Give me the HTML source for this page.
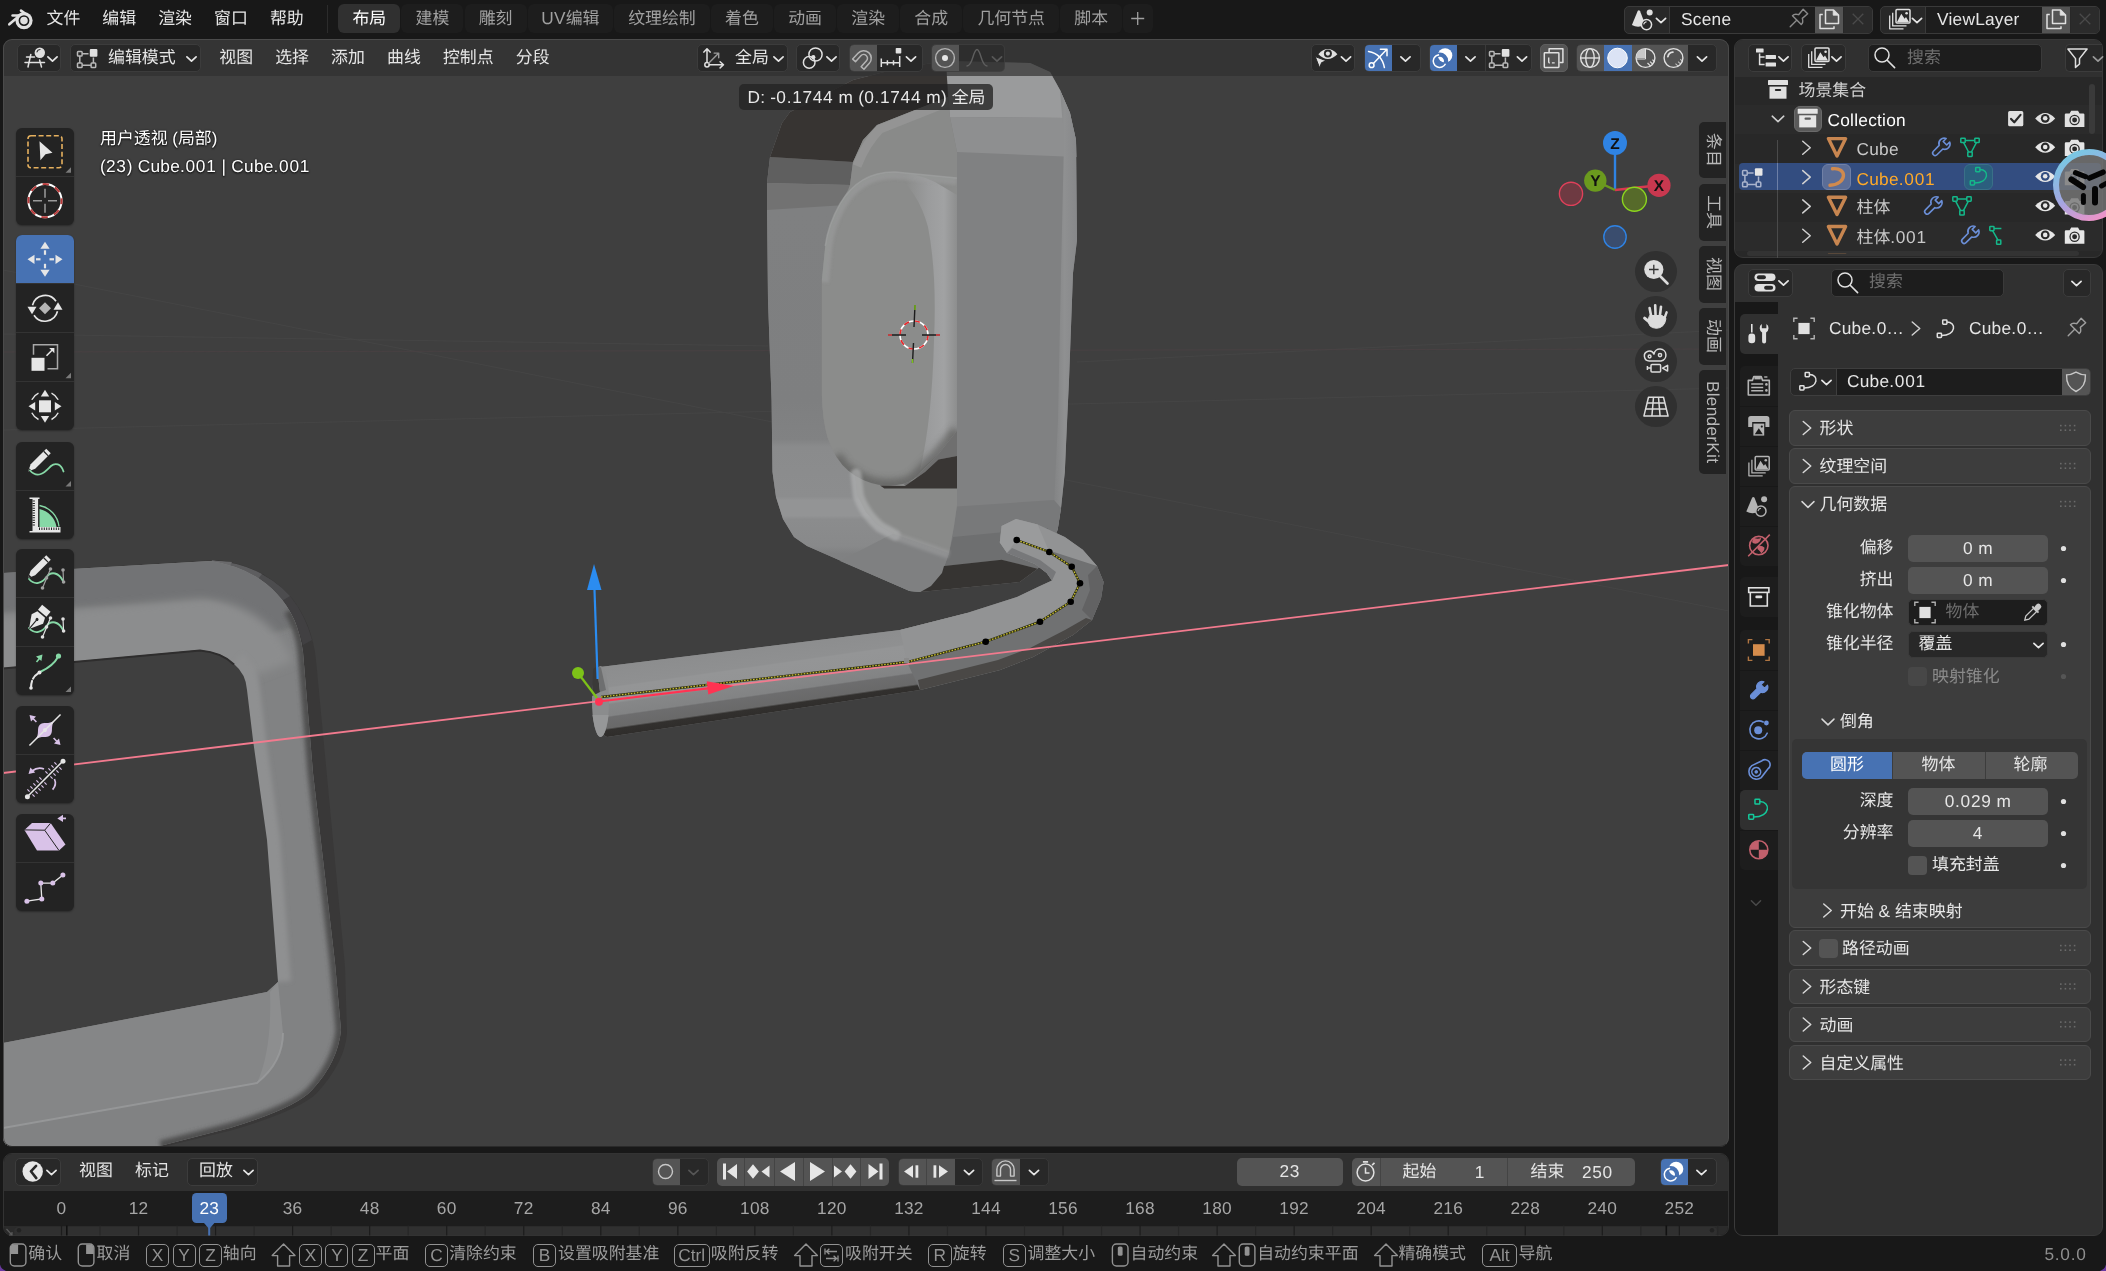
<!DOCTYPE html><html lang="zh"><head><meta charset="utf-8"><title>Blender</title><style>*{box-sizing:border-box;margin:0;padding:0}
html,body{width:2106px;height:1271px;overflow:hidden;background:#181818}
body{position:relative;will-change:transform;text-rendering:geometricPrecision;font-family:"Liberation Sans","Noto Sans CJK SC",sans-serif;font-size:16.9px;color:#e6e6e6;line-height:1}
.l{font-size:17.3px;letter-spacing:.25px}
.d{letter-spacing:.7px}
.a{position:absolute}
.t{position:absolute;white-space:nowrap;line-height:28px;height:28px}
.btn{position:absolute;height:28px;background:#282828;border:1px solid #3c3c3c;border-radius:5px}
.ic{position:absolute;overflow:visible}
svg{overflow:visible}
.area{position:absolute;border-radius:9px;overflow:hidden}
</style></head><body>
<svg class="ic" style="left:0;top:0" width="1" height="1"><g stroke="#e0e0e0" stroke-linecap="round" fill="none"><path d="M12.6 15.5 H25" stroke-width="2.6"/><path d="M9.3 24.3 L18.5 16.6" stroke-width="2.6"/><path d="M21 10.6 L27.5 15.2" stroke-width="2.6"/></g><circle cx="24" cy="20.6" r="8.6" fill="#e0e0e0"/><circle cx="24" cy="20.6" r="4.6" fill="#e0e0e0" stroke="#181818" stroke-width="1.6"/></svg>
<div class="t" style="left:46.5px;top:4.5px">文件</div>
<div class="t" style="left:102.35px;top:4.5px">编辑</div>
<div class="t" style="left:158.2px;top:4.5px">渲染</div>
<div class="t" style="left:214.04999999999998px;top:4.5px">窗口</div>
<div class="t" style="left:269.9px;top:4.5px">帮助</div>
<div class="a" style="left:326.5px;top:5px;width:1px;height:28px;background:#2c2c2c"></div>
<div class="a" style="left:338.3px;top:4px;width:62.1px;height:29px;background:#303030;border-radius:6px;color:#ffffff;text-align:center;line-height:29px;white-space:nowrap">布局</div>
<div class="a" style="left:401.40000000000003px;top:4px;width:62.1px;height:29px;background:#1d1d1d;border-radius:6px;color:#a0a0a0;text-align:center;line-height:29px;white-space:nowrap">建模</div>
<div class="a" style="left:464.50000000000006px;top:4px;width:62.1px;height:29px;background:#1d1d1d;border-radius:6px;color:#a0a0a0;text-align:center;line-height:29px;white-space:nowrap">雕刻</div>
<div class="a" style="left:527.6px;top:4px;width:85.5px;height:29px;background:#1d1d1d;border-radius:6px;color:#a0a0a0;text-align:center;line-height:29px;white-space:nowrap"><span class="l">UV</span>编辑</div>
<div class="a" style="left:614.1px;top:4px;width:95.8px;height:29px;background:#1d1d1d;border-radius:6px;color:#a0a0a0;text-align:center;line-height:29px;white-space:nowrap">纹理绘制</div>
<div class="a" style="left:710.9px;top:4px;width:62.1px;height:29px;background:#1d1d1d;border-radius:6px;color:#a0a0a0;text-align:center;line-height:29px;white-space:nowrap">着色</div>
<div class="a" style="left:774.0px;top:4px;width:62.1px;height:29px;background:#1d1d1d;border-radius:6px;color:#a0a0a0;text-align:center;line-height:29px;white-space:nowrap">动画</div>
<div class="a" style="left:837.1px;top:4px;width:62.1px;height:29px;background:#1d1d1d;border-radius:6px;color:#a0a0a0;text-align:center;line-height:29px;white-space:nowrap">渲染</div>
<div class="a" style="left:900.2px;top:4px;width:62.1px;height:29px;background:#1d1d1d;border-radius:6px;color:#a0a0a0;text-align:center;line-height:29px;white-space:nowrap">合成</div>
<div class="a" style="left:963.3000000000001px;top:4px;width:95.8px;height:29px;background:#1d1d1d;border-radius:6px;color:#a0a0a0;text-align:center;line-height:29px;white-space:nowrap">几何节点</div>
<div class="a" style="left:1060.1000000000001px;top:4px;width:62.1px;height:29px;background:#1d1d1d;border-radius:6px;color:#a0a0a0;text-align:center;line-height:29px;white-space:nowrap">脚本</div>
<div class="a" style="left:1123.2px;top:4px;width:30px;height:29px;background:#1d1d1d;border-radius:6px"></div>
<svg class="ic" style="left:0;top:0" width="1" height="1"><path d="M1131.2 18.5 H1144.2 M1137.7 12 V25" stroke="#a0a0a0" stroke-width="1.3" fill="none"/></svg>
<div class="a" style="left:1624px;top:5.5px;width:249px;height:28px;border-radius:5px;background:#282828;border:1px solid #3a3a3a;overflow:hidden"><div class="a" style="left:44px;top:-1px;width:146px;height:28px;background:#1d1d1d;border-left:1px solid #3a3a3a"></div><div class="a" style="left:190px;top:-1px;width:28px;height:28px;background:#545454"></div><div class="a" style="left:219px;top:-1px;width:29px;height:28px;background:#2b2b2b"></div></div>
<div class="t" style="left:1681px;top:5px"><span class="l">Scene</span></div>
<svg class="ic" style="left:0;top:0" width="1" height="1"><path d="M1637.8 10.8 Q1639.1 9.7 1640.1 11.2 L1643.5 20 L1641.5 26.2 Q1636.5 27.6 1631.9 25 Z" fill="#e0e0e0"/><circle cx="1649.7" cy="12.6" r="3" fill="#e0e0e0"/><circle cx="1646.5" cy="24.6" r="5.1" fill="#282828" stroke="#e0e0e0" stroke-width="1.5"/><path d="M1643.8 24 A3 3 0 0 1 1646.1 21.8" stroke="#e0e0e0" stroke-width="1.2" fill="none" stroke-linecap="round"/></svg>
<svg class="ic" style="left:0;top:0" width="1" height="1"><path d="M1656.4 18.3 L1661 22.7 L1665.6 18.3" fill="none" stroke="#e6e6e6" stroke-width="1.7" stroke-linecap="round" stroke-linejoin="round"/></svg>
<svg class="ic" style="left:0;top:0" width="1" height="1"><g transform="translate(1798 19) rotate(45)" fill="none" stroke="#8a8a8a" stroke-width="1.4" stroke-linejoin="round" stroke-linecap="round"><path d="M-3.2 -10.5 H3.2 L2.6 -3.5 Q6.5 -1.5 6.2 1.6 H-6.2 Q-6.5 -1.5 -2.6 -3.5 Z"/><path d="M0 1.8 V11"/></g></svg>
<svg class="ic" style="left:0;top:0" width="1" height="1"><g fill="none" stroke="#e0e0e0" stroke-width="1.5" stroke-linejoin="round"><path d="M1825.5 10 H1833.5 L1838.5 15 V23.5 H1825.5 Z"/><path d="M1833.2 10.2 V15.2 H1838.3 Z" fill="#e0e0e0" stroke-width="0.8"/><path d="M1822.8 14.5 H1820 V28.5 H1834 V26.2"/></g></svg>
<svg class="ic" style="left:0;top:0" width="1" height="1"><path d="M1852.7 13.7 L1863.3 24.3 M1863.3 13.7 L1852.7 24.3" stroke="#4a4a4a" stroke-width="1.3" fill="none"/></svg>
<div class="a" style="left:1880px;top:5.5px;width:220px;height:28px;border-radius:5px;background:#282828;border:1px solid #3a3a3a;overflow:hidden"><div class="a" style="left:44px;top:-1px;width:117px;height:28px;background:#1d1d1d;border-left:1px solid #3a3a3a"></div><div class="a" style="left:161px;top:-1px;width:28px;height:28px;background:#545454"></div><div class="a" style="left:190px;top:-1px;width:29px;height:28px;background:#2b2b2b"></div></div>
<div class="t" style="left:1937px;top:5px"><span class="l">ViewLayer</span></div>
<svg class="ic" style="left:0;top:0" width="1" height="1"><g fill="none" stroke="#e0e0e0" stroke-width="1.3" stroke-linejoin="round"><path d="M1889.7 15.5 V28.8 H1903.5" /><path d="M1892.7 12.8 V25.9 H1906.5"/><rect x="1896" y="9.5" width="14" height="13.6" rx="1" stroke-width="1.5"/></g><path d="M1897 22.1 L1901.3 13.7 L1904.6 18.7 L1906 17.1 L1909 22.1 Z" fill="#e0e0e0"/><circle cx="1906.6" cy="13.2" r="1.3" fill="#e0e0e0"/></svg>
<svg class="ic" style="left:0;top:0" width="1" height="1"><path d="M1912.4 18.3 L1917 22.7 L1921.6 18.3" fill="none" stroke="#e6e6e6" stroke-width="1.7" stroke-linecap="round" stroke-linejoin="round"/></svg>
<svg class="ic" style="left:0;top:0" width="1" height="1"><g fill="none" stroke="#e0e0e0" stroke-width="1.5" stroke-linejoin="round"><path d="M2052.5 10 H2060.5 L2065.5 15 V23.5 H2052.5 Z"/><path d="M2060.2 10.2 V15.2 H2065.3 Z" fill="#e0e0e0" stroke-width="0.8"/><path d="M2049.8 14.5 H2047 V28.5 H2061 V26.2"/></g></svg>
<svg class="ic" style="left:0;top:0" width="1" height="1"><path d="M2079.7 13.7 L2090.3 24.3 M2090.3 13.7 L2079.7 24.3" stroke="#4a4a4a" stroke-width="1.3" fill="none"/></svg>
<div class="area" style="left:3px;top:39px;width:1726px;height:1108px;background:#3f3f3f">
<div class="a" style="left:-3px;top:-39px;width:2106px;height:1271px">
<svg class="ic" style="left:0;top:0" width="2106" height="1271" viewBox="0 0 2106 1271">
<defs>
<linearGradient id="gTopBar" x1="0" y1="0" x2="0.06" y2="1"><stop offset="0" stop-color="#6c6d6e"/><stop offset=".42" stop-color="#78797a"/><stop offset=".5" stop-color="#8b8c8d"/><stop offset=".9" stop-color="#88898a"/><stop offset=".97" stop-color="#6a6a6a"/><stop offset="1" stop-color="#3a3939"/></linearGradient>
<linearGradient id="gVert" gradientUnits="userSpaceOnUse" x1="250" y1="760" x2="325" y2="752"><stop offset="0" stop-color="#929394"/><stop offset=".2" stop-color="#88898a"/><stop offset=".72" stop-color="#7f8081"/><stop offset=".82" stop-color="#5e5e5f"/><stop offset=".9" stop-color="#424142"/><stop offset="1" stop-color="#373636"/></linearGradient>
<linearGradient id="gTube" gradientUnits="userSpaceOnUse" x1="758" y1="646" x2="768" y2="716"><stop offset="0" stop-color="#8c8d8e"/><stop offset=".27" stop-color="#8f9091"/><stop offset=".29" stop-color="#949596"/><stop offset=".49" stop-color="#939495"/><stop offset=".52" stop-color="#868788"/><stop offset=".68" stop-color="#828384"/><stop offset=".7" stop-color="#6d6d6e"/><stop offset=".85" stop-color="#696969"/><stop offset=".875" stop-color="#32302e"/><stop offset="1" stop-color="#2e2c2a"/></linearGradient>
<linearGradient id="gLeftWall" gradientUnits="userSpaceOnUse" x1="0" y1="210" x2="0" y2="592"><stop offset="0" stop-color="#7f8081"/><stop offset=".5" stop-color="#7e7f80"/><stop offset=".6" stop-color="#818283"/><stop offset=".62" stop-color="#8a8b8c"/><stop offset=".75" stop-color="#8c8d8e"/><stop offset=".76" stop-color="#939495"/><stop offset=".8" stop-color="#939495"/><stop offset=".81" stop-color="#8b8c8d"/><stop offset=".88" stop-color="#88898a"/><stop offset=".9" stop-color="#808182"/><stop offset="1" stop-color="#7f8081"/></linearGradient>
<linearGradient id="gRim" gradientUnits="userSpaceOnUse" x1="905" y1="0" x2="957" y2="0"><stop offset="0" stop-color="#8a8b8a"/><stop offset=".45" stop-color="#9b9c9d"/><stop offset=".75" stop-color="#a1a2a3"/><stop offset="1" stop-color="#8d8e8e"/></linearGradient>
<linearGradient id="gEdgeR" gradientUnits="userSpaceOnUse" x1="1052" y1="0" x2="1077" y2="0"><stop offset="0" stop-color="#808182"/><stop offset=".5" stop-color="#8f9091"/><stop offset="1" stop-color="#87888a"/></linearGradient>
</defs>
<g stroke="#474747" stroke-width="1" fill="none" opacity=".75"><path d="M3 270 L1729 611"/><path d="M3 430 L1729 388"/><path d="M3 334 L768 346"/><path d="M1077 362 L1729 330"/></g>
<path d="M3 352 L1729 349" stroke="#4b4143" stroke-width="1" fill="none" opacity=".8"/>
<defs><filter id="bl3" filterUnits="userSpaceOnUse" x="700" y="100" width="500" height="600"><feGaussianBlur stdDeviation="3"/></filter><filter id="bl1" filterUnits="userSpaceOnUse" x="700" y="100" width="500" height="600"><feGaussianBlur stdDeviation="1.8"/></filter><filter id="bl2" filterUnits="userSpaceOnUse" x="-40" y="500" width="500" height="700"><feGaussianBlur stdDeviation="2.2"/></filter><filter id="bl4" filterUnits="userSpaceOnUse" x="-40" y="500" width="500" height="700"><feGaussianBlur stdDeviation="4"/></filter>
<clipPath id="cFront"><path d="M3 573 L210 561 Q252 567 277 594 Q298 616 303 652 L313 773 L335 963 L341 1030 Q338 1062 312 1090 Q296 1108 230 1128 L160 1146 L3 1146 Z"/></clipPath></defs>
<path d="M3 573 L217 560 Q262 565 290 596 Q312 622 316 660 L333 840 L345 967 L347 1033 Q345 1062 317 1093 Q300 1110 233 1130 L167 1146 L3 1146 Z" fill="#393838"/>
<path d="M212 560.5 Q262 565 290 596 Q305 614 312 640 L303 645 Q296 616 277 594 Q252 567 208 566 Z" fill="#414042"/>
<path d="M212 560.5 Q262 565 290 596 L280 602 Q258 575 208 570 Z" fill="#4c4c4e"/>
<path d="M212 560.5 Q240 562 262 574 L254 584 Q236 572 208 570 Z" fill="#5d5d5f"/>
<path d="M212 560.5 L232 562 L226 574 L208 570 Z" fill="#6a6a6c"/>
<g clip-path="url(#cFront)">
<rect x="0" y="540" width="360" height="620" fill="#818283"/>
<path d="M-20 574 L210 561 Q252 567 277 594 Q290 608 296 626" stroke="#727374" stroke-width="80" fill="none" filter="url(#bl2)" stroke-linecap="butt"/>
<path d="M-20 672 L200 652 Q222 654 234 666 Q240 672 243 680" stroke="#8c8d8e" stroke-width="106" fill="none" filter="url(#bl4)" stroke-linecap="butt"/>
<path d="M234 664 Q246 674 247 690 L253 740 L267 840 L278 982" stroke="#8f9091" stroke-width="26" fill="none" filter="url(#bl2)"/>
<path d="M290 610 Q302 630 304 652 L314 773 L336 963 L342 1030 Q339 1062 313 1091 Q297 1109 231 1129 L161 1147" stroke="#504f50" stroke-width="13" fill="none" filter="url(#bl2)"/>
</g>
<path d="M3 668 L200 650 Q222 652 234 664 Q246 674 247 690 L253 740 L267 840 L278 982 L267 992 L3 1043 Z" fill="#3f3f3f"/>
<path d="M3 668.5 L200 650.5 Q222 652.5 234 664.5" stroke="#2e2d2d" stroke-width="2" fill="none"/>
<path d="M3 1043 L267 992 L278 982 L283 1033 Q283 1062 257 1083 L3 1128 Z" fill="#858687"/>
<path d="M270 992 L278 982 L283 1033 Q283 1062 257 1083 Q272 1050 270 992 Z" fill="#8f9091" opacity=".8"/>
<path d="M3 1128 L257 1083 Q283 1062 283 1033" stroke="#9a9b9c" stroke-width="2" fill="none" opacity=".8"/>
<path d="M770 157 L782 123 L790 112 L800 107 L853 80 L900 68 L946 61 L1030 63 L1050 72 L1060 90 L1070 113 L1076 140 L1077 240 L1073 273 L1069 380 L1067 420 L1064.8 472 L1061 508 L1057.6 530 L1050 550 L1037.7 568.7 L1019.7 582 L920.4 592 L909.6 591 L807 546 L794 537 L783 519 L776 497 L772.5 472 L771.6 400 L768 300 L767 183 Z" fill="#808182"/>
<polygon points="946,61 1030,63 1050,72 1060,90 1070,113 1071,118 950,117" fill="#9a9b9c" />
<polygon points="950,117 1071,118 1076,140 1076.5,157 957,152" fill="#8e8f90" />
<path d="M1060 90 L1070 113 L1076 140 L1077 240 L1073 273 L1069 380 L1064.8 472 L1061 508 L1057.6 530 L1050 530 L1054 505 L1058 420 L1061 273 L1064 140 Z" fill="url(#gEdgeR)"/>
<polygon points="957,506.5 1054,500 1061,508 1057.6,530 1050,550 1037.7,568.7 1001.6,559.7 944,566 949,553 954,526" fill="#78797a" />
<polygon points="953,537 1048,528 1050,550 1037.7,568.7 1001.6,559.7 944,566 949,553" fill="#6e6f70" />
<polygon points="770,157 853,162 850,185 767,183" fill="#5f5f5f" />
<polygon points="767,183 850,185 846,212 767,210" fill="#727272" />
<path d="M767 210 L846 205 L860 240 L860 440 L855.5 476 L857 494 L866 512 L877 524.5 L893 533.5 L949 553 L942 573 L931 586 L920.4 592 L909.6 591 L807 546 L794 537 L783 519 L776 497 L772.5 472 L771.6 400 L768 300 Z" fill="url(#gLeftWall)"/>
<polygon points="893,533.5 949,553 942,573 931,586 920.4,592 909.6,591 840,561" fill="#7f8081" />
<path d="M770 157 L782 123 L790 112 L800 107 L853 80 L900 68 L946 61 L948 97 L877 125 L863 140 L853 162 Z" fill="#373432"/>
<path d="M853 162 L863 140 L877 125 L948 97 L950 117 L957 152 L957 505 L954 526 L949 553 L893 533.5 L877 524.5 L866 512 L857 494 L855.5 476 L848.7 471.1 Q835 460 827.4 437.1 Q822.5 420 821.9 394.6 L821.9 279.9 L825.3 245.9 Q828 225 840.2 203.4 L848 190 L850 185 Z" fill="#898a89"/>
<path d="M857 166 Q866 143 880 129 L948 102" stroke="#9c9d9c" stroke-width="9" fill="none" opacity=".55"/>
<defs><clipPath id="cDisc"><path d="M957 178 L895.4 172 Q860 171 840.2 203.4 Q828 225 825.3 245.9 L821.9 279.9 L821.9 394.6 Q822.5 420 827.4 437.1 Q835 460 848.7 471.1 Q862 482 878.4 484.7 Q892 486.5 903.9 483.8 Q914 481 922 471 L938.5 454 L957 430.7 Z"/></clipPath></defs>
<path d="M957 178 L895.4 172 Q860 171 840.2 203.4 Q828 225 825.3 245.9 L821.9 279.9 L821.9 394.6 Q822.5 420 827.4 437.1 Q835 460 848.7 471.1 Q862 482 878.4 484.7 Q892 486.5 903.9 483.8 Q914 481 922 471 L938.5 454 L957 430.7 Z" fill="#8b8c8b"/>
<g clip-path="url(#cDisc)">
<path d="M893 173 Q915 172 935 182 L957 195 L957 430.7 L938.5 454 L920 470 Q932 420 934 340 Q937 273 928 227 Q918 190 893 173 Z" fill="url(#gRim)"/>
<path d="M822 282 L825.3 245.9 Q828 225 840.2 203.4 Q860 171 895.4 172 L957 178" stroke="#9d9e9f" stroke-width="14" fill="none" opacity=".55" filter="url(#bl1)"/>
<path d="M836 456 Q843 468 848.7 471.1 Q862 482 878.4 484.7 Q892 486.5 903.9 483.8 Q914 481 922 471 L938.5 454 L957 430.7" stroke="#555453" stroke-width="13" fill="none" opacity=".6" filter="url(#bl3)"/>
</g>
<path d="M825.3 245.9 Q828 225 840.2 203.4 Q860 171 895.4 172 L957 178" stroke="#a2a3a3" stroke-width="1.6" fill="none" opacity=".6"/>
<polygon points="903.9,483.8 914,480 922,471 938.5,454 957,430.7 957,456 938.5,459.5 925,472 905,486" fill="#6f6f6f" />
<polygon points="880,485.5 905,486 925,472 938.5,459.5 957,456 957,488.4 884.4,488.4" fill="#393634" />
<path d="M856 474 L858.5 496 Q864 513 880 527 L895 535" stroke="#b4b5b6" stroke-width="11" fill="none" opacity=".62" stroke-linecap="round" filter="url(#bl1)"/>
<path d="M895 536 L949 555" stroke="#a0a1a2" stroke-width="8" fill="none" opacity=".5" filter="url(#bl1)"/>
<polygon points="944,566 1001.6,559.7 1037.7,568.7 1019.7,582 920.4,592 931,586 942,573" fill="#363432" />
<path d="M600 667 L900 630 L967 613 L1017 597 L1040 586 L1052 580.4 L1046.7 573 L1035 564 L1007 553 L999.8 542.5 L1001.6 526 L1016 519 L1037.7 524.5 L1064.8 537 L1082.8 549.8 L1097 566 L1103.6 582 L1101 598.5 L1092 620 L1073 635 L1033 657 L1000 670 L920 690 L607 737 L600 733 L598 700 Z" fill="#7c7d7e"/>
<polygon points="600,667 900,630 967,613 985,670 920,690 607,737 600,733 598,700" fill="url(#gTube)" />
<path d="M900 630 L967 613 L1017 597 L1040 586 L1052 580.4 L1046.7 573 L1035 564 L1007 553 L999.8 542.5 L1001.6 526 L1016 519 L1037.7 524.5 L1064.8 537 L1082.8 549.8 L1097 566 L1080 583.3 L1071.7 566.7 L1049.3 552 L1016.7 540 L1049.3 552 L1071.7 566.7 L1080 583.3 L1070.7 601.7 L1040 621.7 L985.7 641.7 L907 662 Z" fill="#929394"/>
<polygon points="999.8,542.5 1001.6,526 1016,519 1037.7,524.5 1049.3,552 1016.7,540 1007,553" fill="#9a9b9c" />
<path d="M907 662 L985.7 641.7 L1040 621.7 L1070.7 601.7 L1080 583.3 L1071.7 566.7 L1049.3 552 L1016.7 540 L1097 566 L1103.6 582 L1101 598.5 L1092 620 L1073 635 L1033 657 L1000 670 L920 690 Z" fill="#707172"/>
<polygon points="1097,566 1103.6,582 1101,598.5 1092,620 1082,610 1090,590 1088,575" fill="#626263" />
<path d="M920 690 L1000 670 L1033 657 L1073 635 L1092 620 L1086 618 L1065 630 L1030 648 L998 660 L918 680 Z" fill="#4a4846"/>
<polygon points="1052,580.4 1046.7,573 1035,564 1007,553 1012,548 1040,560 1056,572" fill="#77787a" />
<ellipse cx="600.5" cy="701.5" rx="8.5" ry="35.5" fill="#8b8c8d"/>
<path d="M592.2 696 L593 669 L597 666.5 L600 692 Z" fill="#3a3938"/><path d="M600 692 L597 666.5 L601 667.5 L606 690 Z" fill="#6e6f70"/>
<path d="M592.5 715 Q596 738 601 737 Q606 735 608.6 715 Z" fill="#969798"/>
<path d="M3 773 L1729 565" stroke="#f27a8e" stroke-width="1.8" fill="none"/>
<path d="M601 697 L907 662 L985.7 641.7 L1040 621.7 L1070.7 601.7 L1080 583.3 L1071.7 566.7 L1049.3 552 L1016.7 540" stroke="#2c2c10" stroke-width="2.3" fill="none"/><path d="M601 697 L907 662 L985.7 641.7 L1040 621.7 L1070.7 601.7 L1080 583.3 L1071.7 566.7 L1049.3 552 L1016.7 540" stroke="#c9c032" stroke-width="1.3" fill="none" stroke-dasharray="1.6 1.4"/>
<circle cx="985.7" cy="641.7" r="3.3" fill="#000"/>
<circle cx="1040" cy="621.7" r="3.3" fill="#000"/>
<circle cx="1070.7" cy="601.7" r="3.3" fill="#000"/>
<circle cx="1080" cy="583.3" r="3.3" fill="#000"/>
<circle cx="1071.7" cy="566.7" r="3.3" fill="#000"/>
<circle cx="1049.3" cy="552" r="3.3" fill="#000"/>
<circle cx="1016.7" cy="540" r="3.3" fill="#000"/>
<rect x="904" y="658" width="5" height="5" fill="#8a8a8a"/>
<path d="M597.6 679 L594.5 590" stroke="#2b8cf0" stroke-width="2.2" fill="none"/><path d="M587 590 L601.5 590 L594 564 Z" fill="#2b8cf0"/>
<path d="M581 677 L597 698" stroke="#7dc218" stroke-width="2.2" fill="none"/><circle cx="578" cy="673" r="6" fill="#7dc218"/>
<path d="M599 701.5 L712 687.8" stroke="#ff3352" stroke-width="2.2" fill="none"/><path d="M706.7 681.2 L733.5 686 L708.3 694.5 Z" fill="#ff3352"/><circle cx="599" cy="701.7" r="4" fill="#ff3352"/>
<circle cx="914" cy="335" r="14" fill="none" stroke="#fff" stroke-width="1.6"/><circle cx="914" cy="335" r="14" fill="none" stroke="#e8262a" stroke-width="1.6" stroke-dasharray="5.5 5.5"/>
<path d="M888 335 H906 M922 335 H940 M915 305 L914 327 M913.5 343 L912.5 363" stroke="#1c1c1c" stroke-width="1.4" fill="none"/>
<path d="M915 305 V310 M912.5 359 V363" stroke="#7dc218" stroke-width="1.4"/><path d="M888 335 H892 M936 335 H940" stroke="#e8464a" stroke-width="1.4"/>
</svg>
</div>
<div class="a" style="left:0;top:0;width:1726px;height:37px;background:rgba(48,48,48,.7)"></div>
<div class="a" style="left:0;top:0;width:1726px;height:1108px;border:1px solid #4b4b4b;border-radius:9px;border-right-color:#4a4a4a;border-bottom-color:#2a2a2a"></div>
</div>
<div class="btn" style="left:17px;top:43.5px;width:44px;background:#282828;"></div>
<svg class="ic" style="left:0;top:0" width="1" height="1"><g stroke="#e0e0e0" stroke-width="1.5" fill="none" stroke-linecap="round"><path d="M26.5 57.0 H34.5 M25 62.5 H44.5 M30.8 54.5 L28 67.0 M39.6 60.0 L41.5 67.0"/></g><circle cx="39.8" cy="52.7" r="5.2" fill="#e0e0e0"/><path d="M37 51.9 A3.2 3.2 0 0 1 40 49.5" stroke="#282828" stroke-width="1.1" fill="none" stroke-linecap="round"/></svg>
<svg class="ic" style="left:0;top:0" width="1" height="1"><path d="M47.9 56.8 L52.5 61.2 L57.1 56.8" fill="none" stroke="#e6e6e6" stroke-width="1.7" stroke-linecap="round" stroke-linejoin="round"/></svg>
<div class="btn" style="left:70px;top:43.5px;width:131px;background:#282828;"></div>
<svg class="ic" style="left:0;top:0" width="1" height="1"><g stroke="#b8b8b8" stroke-width="1.5" fill="none"><rect x="77.5" y="51.5" width="4.6" height="4.6" rx=".8"/><rect x="77.5" y="63.0" width="4.6" height="4.6" rx=".8"/><rect x="91.1" y="63.0" width="4.6" height="4.6" rx=".8"/><path d="M79.8 56.1 V63.0 M82.1 65.3 H91.1 M93.4 63.0 V57.5 M82.1 53.8 H88.5"/></g><rect x="89.8" y="49.1" width="7.6" height="7.6" rx="1" fill="#e0e0e0"/></svg>
<div class="t" style="left:108px;top:43.5px">编辑模式</div>
<svg class="ic" style="left:0;top:0" width="1" height="1"><path d="M186.9 56.8 L191.5 61.2 L196.1 56.8" fill="none" stroke="#e6e6e6" stroke-width="1.7" stroke-linecap="round" stroke-linejoin="round"/></svg>
<div class="t" style="left:219.3px;top:43.5px">视图</div>
<div class="t" style="left:275.2px;top:43.5px">选择</div>
<div class="t" style="left:331.09999999999997px;top:43.5px">添加</div>
<div class="t" style="left:386.99999999999994px;top:43.5px">曲线</div>
<div class="t" style="left:442.8999999999999px;top:43.5px">控制点</div>
<div class="t" style="left:515.8px;top:43.5px">分段</div>
<div class="btn" style="left:697px;top:43.5px;width:90.5px;background:#282828;"></div>
<svg class="ic" style="left:0;top:0" width="1" height="1"><g stroke="#e0e0e0" stroke-width="1.5" fill="none" stroke-linecap="round" stroke-linejoin="round"><path d="M707.0 62.5 V49.0 M703.9 52.1 L707.0 48.7 L710.1 52.1"/><path d="M709.3 64.8 H723.3 M720.1 61.7 L723.5 64.8 L720.1 67.9"/><circle cx="707.0" cy="64.8" r="2.2"/></g><g stroke="#9a9a9a" stroke-width="1.4" fill="none" stroke-linecap="round" stroke-linejoin="round"><path d="M708.9 62.9 L718.3 53.5 M714.1 53.1 H718.7 V57.7"/></g></svg>
<div class="t" style="left:735px;top:43.5px">全局</div>
<svg class="ic" style="left:0;top:0" width="1" height="1"><path d="M773.9 56.8 L778.5 61.2 L783.1 56.8" fill="none" stroke="#e6e6e6" stroke-width="1.7" stroke-linecap="round" stroke-linejoin="round"/></svg>
<div class="btn" style="left:796px;top:43.5px;width:44px;background:#282828;"></div>
<svg class="ic" style="left:0;top:0" width="1" height="1"><g stroke="#e0e0e0" stroke-width="1.5" fill="none"><circle cx="815.5" cy="54.5" r="6.6"/><circle cx="809.2" cy="62.4" r="5.8"/></g><circle cx="813.3" cy="57.2" r="2.1" fill="#e0e0e0"/></svg>
<svg class="ic" style="left:0;top:0" width="1" height="1"><path d="M826.9 56.8 L831.5 61.2 L836.1 56.8" fill="none" stroke="#e6e6e6" stroke-width="1.7" stroke-linecap="round" stroke-linejoin="round"/></svg>
<div class="btn" style="left:849px;top:43.5px;width:73.5px;background:#282828;overflow:hidden"></div>
<div class="a" style="left:850px;top:44.5px;width:27px;height:26px;background:#545454;border-radius:4px 0 0 4px"></div>
<svg class="ic" style="left:0;top:0" width="1" height="1"><g transform="translate(863 59) rotate(42)" stroke="#b4b4b4" stroke-width="1.5" fill="none" stroke-linejoin="round"><path d="M-7.6 7 V-1 A7.6 7.6 0 0 1 7.6 -1 V7 H3.8 V-1 A3.8 3.8 0 0 0 -3.8 -1 V7 Z"/></g></svg>
<svg class="ic" style="left:0;top:0" width="1" height="1"><g stroke="#e0e0e0" stroke-width="1.5" fill="none"><path d="M881.3 58.5 V67.1 M899.7 56.1 V67.1 M881.3 62.8 H899.7 M887.4 60.3 V65.3 M893.5 60.3 V65.3"/></g><rect x="895.7" y="47.9" width="5.6" height="5.6" rx=".8" fill="#e0e0e0"/></svg>
<svg class="ic" style="left:0;top:0" width="1" height="1"><path d="M906.4 56.8 L911 61.2 L915.6 56.8" fill="none" stroke="#e6e6e6" stroke-width="1.7" stroke-linecap="round" stroke-linejoin="round"/></svg>
<div class="btn" style="left:931px;top:43.5px;width:73.5px;background:rgba(40,40,40,.55);border-color:rgba(70,70,70,.6)"></div>
<div class="a" style="left:932px;top:44.5px;width:27px;height:26px;background:#545454;border-radius:4px 0 0 4px"></div>
<svg class="ic" style="left:0;top:0" width="1" height="1"><circle cx="945" cy="58" r="9.4" fill="none" stroke="#b4b4b4" stroke-width="1.4"/><circle cx="945" cy="58" r="3" fill="#e6e6e6"/></svg>
<svg class="ic" style="left:0;top:0" width="1" height="1"><path d="M967 66 C973 66 973 49.5 977 49.5 C981 49.5 981 66 987 66" stroke="#5e5e5e" stroke-width="1.4" fill="none" stroke-linecap="round"/></svg>
<svg class="ic" style="left:0;top:0" width="1" height="1"><path d="M992.4 56.8 L997 61.2 L1001.6 56.8" fill="none" stroke="#585858" stroke-width="1.7" stroke-linecap="round" stroke-linejoin="round"/></svg>
<div class="btn" style="left:1311px;top:43.5px;width:44px;background:#282828;"></div>
<svg class="ic" style="left:0;top:0" width="1" height="1"><path d="M1318.4 54.2 Q1327.8 44 1337.4 54.2 Q1327.8 63.6 1318.4 54.2 Z" fill="#e0e0e0"/><circle cx="1327.9" cy="53.6" r="4" fill="#282828"/><circle cx="1327.9" cy="53.6" r="2.1" fill="#e0e0e0"/><path d="M1315.2 56.6 L1326.4 60.8 L1321.6 62.6 L1319.6 67.8 Z" fill="#e0e0e0" stroke="#282828" stroke-width="1"/></svg>
<svg class="ic" style="left:0;top:0" width="1" height="1"><path d="M1341.4 56.8 L1346 61.2 L1350.6 56.8" fill="none" stroke="#e6e6e6" stroke-width="1.7" stroke-linecap="round" stroke-linejoin="round"/></svg>
<div class="btn" style="left:1364px;top:43.5px;width:57px;background:#282828;"></div>
<div class="a" style="left:1365px;top:44.5px;width:27px;height:26px;background:#4772b3;border-radius:4px 0 0 4px"></div>
<svg class="ic" style="left:0;top:0" width="1" height="1"><g stroke="#ffffff" stroke-width="1.5" fill="none" stroke-linecap="round" stroke-linejoin="round"><path d="M1368.5 51.4 Q1382 53.6 1384.4 67.6"/><path d="M1373.4 63.4 L1386.6 49.6 M1380.4 49.2 H1387 V55.8"/><circle cx="1371.6" cy="65.2" r="2.4"/></g></svg>
<svg class="ic" style="left:0;top:0" width="1" height="1"><path d="M1400.9 56.8 L1405.5 61.2 L1410.1 56.8" fill="none" stroke="#e6e6e6" stroke-width="1.7" stroke-linecap="round" stroke-linejoin="round"/></svg>
<div class="btn" style="left:1429px;top:43.5px;width:103px;background:#282828;"></div>
<div class="a" style="left:1430px;top:44.5px;width:27px;height:26px;background:#4772b3;border-radius:4px 0 0 4px"></div>
<div class="a" style="left:1485px;top:44.5px;width:1px;height:26px;background:#3a3a3a"></div>
<svg class="ic" style="left:0;top:0" width="1" height="1"><circle cx="1445.1" cy="55.4" r="7.2" fill="#ffffff"/><circle cx="1439.7" cy="61" r="6.4" fill="none" stroke="#4772b3" stroke-width="4.2"/><circle cx="1439.7" cy="61" r="6.4" fill="none" stroke="#ffffff" stroke-width="1.5" stroke-dasharray="26 14" transform="rotate(25 1439.7 61)"/><path d="M1442.5 54.6 L1447.3 59.6" stroke="#4772b3" stroke-width="1.4"/></svg>
<svg class="ic" style="left:0;top:0" width="1" height="1"><path d="M1465.9 56.8 L1470.5 61.2 L1475.1 56.8" fill="none" stroke="#e6e6e6" stroke-width="1.7" stroke-linecap="round" stroke-linejoin="round"/></svg>
<svg class="ic" style="left:0;top:0" width="1" height="1"><g stroke="#b8b8b8" stroke-width="1.5" fill="none"><rect x="1489.5" y="51.5" width="4.6" height="4.6" rx=".8"/><rect x="1489.5" y="63.0" width="4.6" height="4.6" rx=".8"/><rect x="1503.1" y="63.0" width="4.6" height="4.6" rx=".8"/><path d="M1491.8 56.1 V63.0 M1494.1 65.3 H1503.1 M1505.4 63.0 V57.5 M1494.1 53.8 H1500.5"/></g><rect x="1501.8" y="49.1" width="7.6" height="7.6" rx="1" fill="#e0e0e0"/></svg>
<svg class="ic" style="left:0;top:0" width="1" height="1"><path d="M1517.4 56.8 L1522 61.2 L1526.6 56.8" fill="none" stroke="#e6e6e6" stroke-width="1.7" stroke-linecap="round" stroke-linejoin="round"/></svg>
<div class="btn" style="left:1540px;top:43.5px;width:28px;background:#545454;border-color:#5e5e5e"></div>
<svg class="ic" style="left:0;top:0" width="1" height="1"><g stroke="#e0e0e0" stroke-width="1.5" fill="none" stroke-linejoin="round"><path d="M1549.1 52.2 V48.8 H1562.9 V62.6 H1559.5"/><rect x="1544.3" y="52.8" width="14.6" height="14.6" rx=".6"/><path d="M1548.7 57.4 V62.8 M1548.7 62.9 H1549.9 M1551.9 62.9 H1554.7" stroke-width="1.4"/></g></svg>
<div class="btn" style="left:1575.5px;top:43.5px;width:141.5px;background:#282828;overflow:hidden"></div>
<div class="a" style="left:1576.5px;top:44.5px;width:27px;height:26px;background:#545454;border-radius:4px 0 0 4px"></div>
<div class="a" style="left:1604px;top:44.5px;width:27.5px;height:26px;background:#4772b3"></div>
<div class="a" style="left:1632px;top:44.5px;width:27.5px;height:26px;background:#545454"></div>
<div class="a" style="left:1660px;top:44.5px;width:27.5px;height:26px;background:#545454"></div>
<svg class="ic" style="left:0;top:0" width="1" height="1"><g stroke="#e0e0e0" stroke-width="1.4" fill="none"><circle cx="1590" cy="58" r="9.4"/><ellipse cx="1590" cy="58" rx="4.2" ry="9.4"/><path d="M1580.6 58 H1599.4"/></g></svg>
<svg class="ic" style="left:0;top:0" width="1" height="1"><circle cx="1617.5" cy="58" r="9.8" fill="#dbe3f5" stroke="#fff" stroke-width="1"/></svg>
<svg class="ic" style="left:0;top:0" width="1" height="1"><circle cx="1645.5" cy="58" r="9.4" fill="none" stroke="#e0e0e0" stroke-width="1.4"/><path d="M1645.5 58 V48.6 A9.4 9.4 0 0 0 1636.1 58 Z" fill="#c8c8c8"/><path d="M1636.5 59 H1645.5 V49" stroke="#e0e0e0" stroke-width="1" fill="none"/><path d="M1647.5 63 L1650.7 66.2 M1650.1 61.6 L1652.9 64.4 M1652.5 59.6 L1654.5 61.8" stroke="#e0e0e0" stroke-width="1.2"/></svg>
<svg class="ic" style="left:0;top:0" width="1" height="1"><circle cx="1673.5" cy="58" r="9.4" fill="none" stroke="#e0e0e0" stroke-width="1.4"/><path d="M1667.9 56.6 A5.6 5.6 0 0 1 1672.9 52.2" stroke="#e0e0e0" stroke-width="1.8" fill="none" stroke-linecap="round"/><path d="M1675.5 63.6 L1678.1 66.2 M1678.1 61.6 L1680.7 64.2 M1680.3 59.2 L1682.3 61.4" stroke="#e0e0e0" stroke-width="1.1" opacity=".75"/></svg>
<svg class="ic" style="left:0;top:0" width="1" height="1"><path d="M1697.4 56.8 L1702 61.2 L1706.6 56.8" fill="none" stroke="#e6e6e6" stroke-width="1.7" stroke-linecap="round" stroke-linejoin="round"/></svg>
<div class="t" style="left:100px;top:125px;color:#fff;text-shadow:0 1px 2px rgba(0,0,0,.8),0 0 2px rgba(0,0,0,.6)">用户透视 (局部)</div>
<div class="t" style="left:100px;top:152px;color:#fff;text-shadow:0 1px 2px rgba(0,0,0,.8),0 0 2px rgba(0,0,0,.6)"><span class="l">(<span class="d">23</span>) Cube<span class="d">.001</span> | Cube<span class="d">.001</span></span></div>
<div class="a" style="left:739px;top:84px;width:254px;height:26px;background:rgba(34,34,34,.78);border-radius:5px"></div><div class="t" style="left:747.5px;top:83px;color:#e8e8e8;word-spacing:0px"><span class="l">D: -<span class="d">0.1744</span> m (<span class="d">0.1744</span> m)</span> 全局</div>
<div class="a" style="left:16px;top:127.7px;width:58px;height:97px;background:#232323;border-radius:6px;box-shadow:0 1px 2px rgba(0,0,0,.35)"></div>
<svg class="ic" style="left:0;top:0" width="1" height="1"><rect x="28" y="135.7" width="34" height="32" rx="3" fill="none" stroke="#e5b05e" stroke-width="1.6" stroke-dasharray="5 2.6"/><path d="M39.5 141.2 L52.5 152.7 L45.5 154.2 L40.4 160.2 Z" fill="#e6e6e6"/></svg>
<svg class="ic" style="left:0;top:0" width="1" height="1"><path d="M71 172.7 V167.2 L65.5 172.7 Z" fill="#7a7a7a"/></svg>
<div class="a" style="left:16px;top:175.7px;width:58px;height:1px;background:#333"></div>
<svg class="ic" style="left:0;top:0" width="1" height="1"><circle cx="45" cy="200.7" r="16.6" fill="none" stroke="#fff" stroke-width="2"/><circle cx="45" cy="200.7" r="16.6" fill="none" stroke="#b83c3c" stroke-width="2" stroke-dasharray="6.5 6.54" stroke-dashoffset="3"/><path d="M33 200.7 H42 M48 200.7 H57 M45 188.7 V197.7 M45 203.7 V212.7" stroke="#9a9a9a" stroke-width="1.5" fill="none"/></svg>
<div class="a" style="left:16px;top:235.3px;width:58px;height:195px;background:#232323;border-radius:6px;box-shadow:0 1px 2px rgba(0,0,0,.35)"></div>
<div class="a" style="left:16px;top:235.3px;width:58px;height:48px;background:#4772b3;border-radius:6px 6px 0 0"></div>
<svg class="ic" style="left:0;top:0" width="1" height="1"><g transform="rotate(0 45 259.3)"><path d="M45 241.8 L49.6 248.8 H40.4 Z" fill="#e6e6e6"/><path d="M45 250.3 V254.8" stroke="#e6e6e6" stroke-width="2.2"/></g><g transform="rotate(90 45 259.3)"><path d="M45 241.8 L49.6 248.8 H40.4 Z" fill="#e6e6e6"/><path d="M45 250.3 V254.8" stroke="#e6e6e6" stroke-width="2.2"/></g><g transform="rotate(180 45 259.3)"><path d="M45 241.8 L49.6 248.8 H40.4 Z" fill="#e6e6e6"/><path d="M45 250.3 V254.8" stroke="#e6e6e6" stroke-width="2.2"/></g><g transform="rotate(270 45 259.3)"><path d="M45 241.8 L49.6 248.8 H40.4 Z" fill="#e6e6e6"/><path d="M45 250.3 V254.8" stroke="#e6e6e6" stroke-width="2.2"/></g></svg>
<div class="a" style="left:16px;top:283.3px;width:58px;height:1px;background:#333"></div>
<svg class="ic" style="left:0;top:0" width="1" height="1"><g stroke="#e6e6e6" stroke-width="1.6" fill="none"><path d="M32.5 305.3 A13 13 0 0 1 56 301.3"/><path d="M57.5 311.3 A13 13 0 0 1 34 315.3"/></g><path d="M27.5 306.8 H36.5 L32 314.3 Z" fill="#e6e6e6"/><path d="M62.5 309.8 H53.5 L58 302.3 Z" fill="#e6e6e6"/><path d="M45 302.3 L51 308.3 L45 314.3 L39 308.3 Z" fill="#b4b4b4"/></svg>
<div class="a" style="left:16px;top:332.3px;width:58px;height:1px;background:#333"></div>
<svg class="ic" style="left:0;top:0" width="1" height="1"><rect x="31.5" y="357.8" width="13" height="13" fill="#e6e6e6"/><path d="M33.5 354.8 V344.8 H57.5 V368.8 H47.5" stroke="#a8a8a8" stroke-width="1.5" fill="none"/><path d="M46.5 355.8 L53 349.3" stroke="#e6e6e6" stroke-width="1.6"/><path d="M49.2 348.1 H54.4 V353.3" fill="#e6e6e6" /></svg>
<svg class="ic" style="left:0;top:0" width="1" height="1"><path d="M71 378.3 V372.8 L65.5 378.3 Z" fill="#7a7a7a"/></svg>
<div class="a" style="left:16px;top:381.3px;width:58px;height:1px;background:#333"></div>
<svg class="ic" style="left:0;top:0" width="1" height="1"><rect x="39" y="400.3" width="12" height="12" fill="#e6e6e6"/><g transform="rotate(0 45 406.3)"><path d="M45 389.8 L49.2 396.5 H40.8 Z" fill="#e6e6e6"/><path d="M51.5 393.1 A14.6 14.6 0 0 1 58.2 399.8" stroke="#e6e6e6" stroke-width="1.4" fill="none"/></g><g transform="rotate(90 45 406.3)"><path d="M45 389.8 L49.2 396.5 H40.8 Z" fill="#e6e6e6"/><path d="M51.5 393.1 A14.6 14.6 0 0 1 58.2 399.8" stroke="#e6e6e6" stroke-width="1.4" fill="none"/></g><g transform="rotate(180 45 406.3)"><path d="M45 389.8 L49.2 396.5 H40.8 Z" fill="#e6e6e6"/><path d="M51.5 393.1 A14.6 14.6 0 0 1 58.2 399.8" stroke="#e6e6e6" stroke-width="1.4" fill="none"/></g><g transform="rotate(270 45 406.3)"><path d="M45 389.8 L49.2 396.5 H40.8 Z" fill="#e6e6e6"/><path d="M51.5 393.1 A14.6 14.6 0 0 1 58.2 399.8" stroke="#e6e6e6" stroke-width="1.4" fill="none"/></g></svg>
<div class="a" style="left:16px;top:441.5px;width:58px;height:97px;background:#232323;border-radius:6px;box-shadow:0 1px 2px rgba(0,0,0,.35)"></div>
<svg class="ic" style="left:0;top:0" width="1" height="1"><g transform="translate(28 471.5) rotate(-45)"><path d="M0 0 L7 -3.2 H29 V3.2 H7 Z" fill="#e6e6e6"/><path d="M25.4 -3.2 V3.2" stroke="#232323" stroke-width="1.2"/><path d="M0 0 L3.2 -1.5 V1.5 Z" fill="#232323"/></g><path d="M30 470.5 C39 480.5 47 469.5 51 466.0 C55 462.5 61 463.5 63.5 471.5" stroke="#86d8a6" stroke-width="1.8" fill="none" stroke-linecap="round"/></svg>
<svg class="ic" style="left:0;top:0" width="1" height="1"><path d="M71 486.5 V481.0 L65.5 486.5 Z" fill="#7a7a7a"/></svg>
<div class="a" style="left:16px;top:489.5px;width:58px;height:1px;background:#333"></div>
<svg class="ic" style="left:0;top:0" width="1" height="1"><path d="M39.5 531.5 V509.0 A22 22 0 0 1 56.5 526.5 V527.0 H39.5 Z" fill="#86d8a6"/><path d="M39.5 509.0 A22 22 0 0 1 57.0 526.5" stroke="#86d8a6" stroke-width="0" fill="none"/><path d="M39.5 505.5 A24 24 0 0 1 59.0 526.5" stroke="#86d8a6" stroke-width="1.3" fill="none"/><path d="M29.5 497.5 H39.5 V499.1 H38.1 V527.0 H60.5 V532.5 H29.5 V530.9 H32.5 V499.1 H29.5 Z" fill="#e6e6e6"/><path d="M33.7 500.5 V526.5" stroke="#232323" stroke-width="2.4" stroke-dasharray="1 1.4"/><path d="M39.0 528.8 H59.5" stroke="#232323" stroke-width="2.4" stroke-dasharray="1 1.4"/></svg>
<div class="a" style="left:16px;top:549px;width:58px;height:146px;background:#232323;border-radius:6px;box-shadow:0 1px 2px rgba(0,0,0,.35)"></div>
<svg class="ic" style="left:0;top:0" width="1" height="1"><path d="M29 579 C35 586 42 583 46.5 577 C51 571 59 572 63.5 582" stroke="#86d8a6" stroke-width="1.8" fill="none" stroke-linecap="round"/><path d="M42.5 588 L50.5 569 M63 570 L63.6 582" stroke="#a0a0a0" stroke-width="1.2"/><circle cx="42.5" cy="588" r="1.8" fill="#a0a0a0"/><circle cx="46.5" cy="578" r="1.8" fill="#a0a0a0"/><circle cx="50.5" cy="569" r="1.8" fill="#a0a0a0"/><circle cx="63" cy="570" r="1.8" fill="#a0a0a0"/><circle cx="63.6" cy="582" r="1.8" fill="#a0a0a0"/><g transform="translate(28 578) rotate(-45)"><path d="M0 0 L7 -3.2 H29 V3.2 H7 Z" fill="#e6e6e6"/><path d="M25.4 -3.2 V3.2" stroke="#232323" stroke-width="1.2"/><path d="M0 0 L3.2 -1.5 V1.5 Z" fill="#232323"/></g></svg>
<div class="a" style="left:16px;top:597px;width:58px;height:1px;background:#333"></div>
<svg class="ic" style="left:0;top:0" width="1" height="1"><path d="M29 628 C35 635 42 632 46.5 626 C51 620 59 621 63.5 631" stroke="#86d8a6" stroke-width="1.8" fill="none" stroke-linecap="round"/><path d="M42.5 637 L50.5 618 M63 619 L63.6 631" stroke="#e0e0e0" stroke-width="1.2"/><circle cx="42.5" cy="637" r="1.8" fill="#e0e0e0"/><circle cx="46.5" cy="627" r="1.8" fill="#e0e0e0"/><circle cx="50.5" cy="618" r="1.8" fill="#e0e0e0"/><circle cx="63" cy="619" r="1.8" fill="#e0e0e0"/><circle cx="63.6" cy="631" r="1.8" fill="#e0e0e0"/><g transform="translate(29 629) rotate(-50)"><path d="M0 0 L13 -7.5 L19 -5 V5 L13 7.5 Z" fill="#e6e6e6"/><path d="M0.5 0 H12" stroke="#232323" stroke-width="1.1"/><circle cx="12.5" cy="0" r="1.5" fill="#232323"/><path d="M20.6 -5.5 H27 V5.5 H20.6 Z" fill="#e6e6e6"/></g></svg>
<div class="a" style="left:16px;top:646px;width:58px;height:1px;background:#333"></div>
<svg class="ic" style="left:0;top:0" width="1" height="1"><path d="M31 688 Q31 677 39 673" stroke="#e6e6e6" stroke-width="2" fill="none" stroke-dasharray="7 2.5" stroke-linecap="round"/><path d="M41 671.5 Q53 666 58 657" stroke="#86d8a6" stroke-width="2" fill="none" stroke-linecap="round"/><circle cx="58.5" cy="656" r="2.6" fill="#86d8a6"/><circle cx="39.5" cy="672.5" r="2" fill="#e6e6e6"/><circle cx="31" cy="688" r="1.8" fill="#e6e6e6"/><path d="M36.5 662 L41 656.5" stroke="#86d8a6" stroke-width="1.6"/><path d="M36 656.5 L42.5 654.5 L41.4 661 Z" fill="#86d8a6"/></svg>
<svg class="ic" style="left:0;top:0" width="1" height="1"><path d="M71 692 V686.5 L65.5 692 Z" fill="#7a7a7a"/></svg>
<div class="a" style="left:16px;top:706px;width:58px;height:97px;background:#232323;border-radius:6px;box-shadow:0 1px 2px rgba(0,0,0,.35)"></div>
<svg class="ic" style="left:0;top:0" width="1" height="1"><g transform="translate(45 730) rotate(-45)"><path d="M-13.5 0 C-6 -1 -5 -7.4 0 -7.4 C5 -7.4 6 -1 13.5 0 C6 1 5 7.4 0 7.4 C-5 7.4 -6 1 -13.5 0 Z" fill="#d9c2e8"/><path d="M-22 0 H22" stroke="#e6e6e6" stroke-width="1.5"/><circle cx="0" cy="0" r="2" fill="#e6e6e6"/></g><path d="M29.5 715 L36 716.4 L31 721.6 Z" fill="#d9c2e8"/><path d="M33 718.5 L36.4 722" stroke="#d9c2e8" stroke-width="1.6"/><path d="M60.5 745 L54 743.6 L59 738.4 Z" fill="#d9c2e8"/><path d="M57 741.5 L53.6 738" stroke="#d9c2e8" stroke-width="1.6"/></svg>
<div class="a" style="left:16px;top:754px;width:58px;height:1px;background:#333"></div>
<svg class="ic" style="left:0;top:0" width="1" height="1"><path d="M27.5 796.5 L62.5 761.5" stroke="#e6e6e6" stroke-width="1.6"/><circle cx="27.4" cy="796.8" r="2.5" fill="#e6e6e6"/><circle cx="63" cy="761.2" r="2.5" fill="#e6e6e6"/><path d="M27.4 789.4 L29.6 791.6 M32.4 794.4 L34.6 796.6" stroke="#d9c2e8" stroke-width="1.2"/><path d="M30.4 786.4 L32.6 788.6 M35.4 791.4 L37.6 793.6" stroke="#d9c2e8" stroke-width="1.2"/><path d="M33.4 783.4 L35.6 785.6 M38.4 788.4 L40.6 790.6" stroke="#d9c2e8" stroke-width="1.2"/><path d="M36.4 780.4 L38.6 782.6 M41.4 785.4 L43.6 787.6" stroke="#d9c2e8" stroke-width="1.2"/><path d="M39.4 777.4 L41.6 779.6 M44.4 782.4 L46.6 784.6" stroke="#d9c2e8" stroke-width="1.2"/><path d="M45.4 771.4 L47.6 773.6 M50.4 776.4 L52.6 778.6" stroke="#d9c2e8" stroke-width="1.2"/><path d="M48.4 768.4 L50.6 770.6 M53.4 773.4 L55.6 775.6" stroke="#d9c2e8" stroke-width="1.2"/><path d="M51.4 765.4 L53.6 767.6 M56.4 770.4 L58.6 772.6" stroke="#d9c2e8" stroke-width="1.2"/><path d="M54.4 762.4 L56.6 764.6 M59.4 767.4 L61.6 769.6" stroke="#d9c2e8" stroke-width="1.2"/><path d="M32 771 Q38 766.5 44 769" stroke="#d9c2e8" stroke-width="1.7" fill="none"/><path d="M28.5 774 L30.4 767.4 L35.2 772.6 Z" fill="#d9c2e8"/><path d="M54.4 779 Q57 784.5 52.6 789.6" stroke="#d9c2e8" stroke-width="1.7" fill="none"/></svg>
<div class="a" style="left:16px;top:813.5px;width:58px;height:97px;background:#232323;border-radius:6px;box-shadow:0 1px 2px rgba(0,0,0,.35)"></div>
<svg class="ic" style="left:0;top:0" width="1" height="1"><polygon points="24.4,829.9 32,823.1 50.6,823.1 65.5,844.6 59,850.5 37,850.5" fill="#d9c2e8"/><path d="M24.4 829.9 L44.7 830.2 L59 850.5 M44.7 830.2 L50.6 823.1" stroke="#232323" stroke-width="1" fill="none"/><path d="M57.3 818.4 L63 814.8 V822.0 Z" fill="#d9c2e8"/><path d="M61 818.4 H66" stroke="#d9c2e8" stroke-width="1.7"/></svg>
<div class="a" style="left:16px;top:861.5px;width:58px;height:1px;background:#333"></div>
<svg class="ic" style="left:0;top:0" width="1" height="1"><path d="M26.9 901.2 L41.8 899.0 L40.8 883.1 L52.8 883.1 L62.9 875.0" stroke="#e6e6e6" stroke-width="1.3" fill="none"/><circle cx="26.9" cy="901.2" r="2.5" fill="#d9c2e8"/><circle cx="41.8" cy="899.0" r="2.5" fill="#d9c2e8"/><circle cx="40.8" cy="883.1" r="2.5" fill="#d9c2e8"/><circle cx="52.8" cy="883.1" r="2.5" fill="#d9c2e8"/><circle cx="62.9" cy="875.0" r="2.5" fill="#d9c2e8"/></svg>
<svg class="ic" style="left:0;top:0" width="1" height="1"><path d="M1615 190 L1615 143" stroke="#2f83e3" stroke-width="2.4"/><path d="M1615 190 L1659 185.3" stroke="#d8384f" stroke-width="2.4"/><path d="M1615 190 L1595 180.6" stroke="#6b9a1e" stroke-width="2.4"/><circle cx="1571" cy="193.8" r="11.6" fill="#6e3a42" stroke="#e0405a" stroke-width="1.4"/><circle cx="1615" cy="237" r="11.2" fill="#3a4d6e" stroke="#2f83e3" stroke-width="1.4"/><circle cx="1595.3" cy="180.6" r="11.2" fill="#6b9a1e"/><circle cx="1659" cy="185.3" r="11.6" fill="#c8384f"/><circle cx="1615" cy="142.9" r="12" fill="#2f83e3"/><circle cx="1634.4" cy="199.2" r="12" fill="#566a2a" stroke="#8cd61e" stroke-width="1.4"/><g font-family="Liberation Sans,sans-serif" font-weight="bold" font-size="15.5" text-anchor="middle" fill="#111"><text x="1615" y="148.5">Z</text><text x="1595.3" y="186">Y</text><text x="1659" y="191">X</text></g></svg>
<div class="a" style="left:1635.3px;top:250.8px;width:41.4px;height:41.4px;border-radius:50%;background:#303030"></div>
<svg class="ic" style="left:0;top:0" width="1" height="1"><circle cx="1653.8" cy="269.5" r="9.6" fill="#dcdcdc"/><path d="M1660.5 276.5 L1667.5 283.5" stroke="#dcdcdc" stroke-width="2.6" stroke-linecap="round"/><path d="M1649 269.5 H1658.6 M1653.8 264.7 V274.3" stroke="#303030" stroke-width="1.3"/></svg>
<div class="a" style="left:1635.3px;top:295.8px;width:41.4px;height:41.4px;border-radius:50%;background:#303030"></div>
<svg class="ic" style="left:0;top:0" width="1" height="1"><g fill="#dcdcdc" stroke="#dcdcdc" stroke-linecap="round"><path d="M1648.5 318.5 Q1647 328.0 1656.5 328.3 Q1664.5 328.0 1666 318.5 L1662 315.5 L1650 315.5 Z" stroke-width="1"/><path d="M1651.6 318.5 L1649.6 308.1" stroke-width="2.6"/><path d="M1655.6 316.5 L1655.2 305.3" stroke-width="2.6"/><path d="M1659.8 316.5 L1661 306.7" stroke-width="2.6"/><path d="M1664 319.5 L1666.6 312.3" stroke-width="2.4"/><path d="M1650 322.5 L1644.6 318.1" stroke-width="3"/></g></svg>
<div class="a" style="left:1635.3px;top:340.8px;width:41.4px;height:41.4px;border-radius:50%;background:#303030"></div>
<svg class="ic" style="left:0;top:0" width="1" height="1"><g fill="none" stroke="#dcdcdc" stroke-width="1.5" stroke-linejoin="round"><path d="M1649.5 361.0 A5 5 0 1 1 1654 354.1 A6 6 0 1 1 1661 361.0 Z"/><circle cx="1649.6" cy="356.5" r="1.4"/><circle cx="1660" cy="355.1" r="1.6"/><rect x="1651" y="364.5" width="9.6" height="7.4" rx="1"/><path d="M1662.6 368.2 L1667.6 365.3 V371.1 Z"/><path d="M1647.4 366.0 V370.0 M1647.4 368.0 H1651"/></g></svg>
<div class="a" style="left:1635.3px;top:385.8px;width:41.4px;height:41.4px;border-radius:50%;background:#303030"></div>
<svg class="ic" style="left:0;top:0" width="1" height="1"><g fill="none" stroke="#dcdcdc" stroke-width="1.5" stroke-linejoin="round"><path d="M1648.5 397.3 H1663.5 L1668.1 416.1 H1643.9 Z"/><path d="M1653.5 397.3 L1651.9 416.1 M1658.5 397.3 L1660.1 416.1 M1647.1 403.1 H1664.9 M1645.7 409.1 H1666.3"/></g></svg>
<div class="a" style="left:1699px;top:121.5px;width:26.5px;height:56.5px;background:#232323;border-radius:5px 0 0 5px"></div>
<div class="a" style="left:1699px;top:121.5px;width:26.5px;height:56.5px;color:#b8b8b8;writing-mode:vertical-rl;text-orientation:sideways;text-align:center;line-height:26.5px;white-space:nowrap">条目</div>
<div class="a" style="left:1699px;top:184px;width:26.5px;height:56.5px;background:#232323;border-radius:5px 0 0 5px"></div>
<div class="a" style="left:1699px;top:184px;width:26.5px;height:56.5px;color:#b8b8b8;writing-mode:vertical-rl;text-orientation:sideways;text-align:center;line-height:26.5px;white-space:nowrap">工具</div>
<div class="a" style="left:1699px;top:246px;width:26.5px;height:56.5px;background:#232323;border-radius:5px 0 0 5px"></div>
<div class="a" style="left:1699px;top:246px;width:26.5px;height:56.5px;color:#b8b8b8;writing-mode:vertical-rl;text-orientation:sideways;text-align:center;line-height:26.5px;white-space:nowrap">视图</div>
<div class="a" style="left:1699px;top:308px;width:26.5px;height:56.5px;background:#232323;border-radius:5px 0 0 5px"></div>
<div class="a" style="left:1699px;top:308px;width:26.5px;height:56.5px;color:#b8b8b8;writing-mode:vertical-rl;text-orientation:sideways;text-align:center;line-height:26.5px;white-space:nowrap">动画</div>
<div class="a" style="left:1699px;top:370px;width:26.5px;height:104px;background:#232323;border-radius:5px 0 0 5px"></div>
<div class="a" style="left:1699px;top:370px;width:26.5px;height:104px;color:#b8b8b8;writing-mode:vertical-rl;text-orientation:sideways;text-align:center;line-height:26.5px;white-space:nowrap"><span class="l">BlenderKit</span></div>
<div class="area" style="left:1734px;top:39px;width:369px;height:219px;background:#282828;border:1px solid #383838">
<div class="a" style="left:0;top:0;width:368px;height:37px;background:#303030"></div>
<div class="a" style="left:0;top:65.0px;width:368px;height:29.3px;background:#2b2b2b"></div>
<div class="a" style="left:0;top:123.60000000000001px;width:368px;height:29.3px;background:#2b2b2b"></div>
<div class="a" style="left:0;top:182.2px;width:368px;height:29.3px;background:#2b2b2b"></div>
<div class="a" style="left:354px;top:44px;width:6px;height:50px;background:#3a3a3a;border-radius:3px"></div>
<div class="a" style="left:12px;top:211px;width:332px;height:5px;background:#333;border-radius:3px"></div>
</div>
<div class="btn" style="left:1747.5px;top:43.5px;width:44.5px"></div>
<svg class="ic" style="left:0;top:0" width="1" height="1"><rect x="1756" y="48.5" width="7.6" height="4" rx=".6" fill="#e0e0e0"/><rect x="1765.6" y="55.1" width="10.4" height="4" rx=".6" fill="#e0e0e0"/><rect x="1765.6" y="62.5" width="10.4" height="4" rx=".6" fill="#e0e0e0"/><path d="M1759.6 53.5 V64.5 H1764.6 M1759.6 57.1 H1764.6" stroke="#e0e0e0" stroke-width="1.5" fill="none"/></svg>
<svg class="ic" style="left:0;top:0" width="1" height="1"><path d="M1778.9 56.8 L1783.5 61.2 L1788.1 56.8" fill="none" stroke="#e6e6e6" stroke-width="1.7" stroke-linecap="round" stroke-linejoin="round"/></svg>
<div class="btn" style="left:1800.5px;top:43.5px;width:45px"></div>
<svg class="ic" style="left:0;top:0" width="1" height="1"><g fill="none" stroke="#e0e0e0" stroke-width="1.3" stroke-linejoin="round"><path d="M1808.7 54.0 V67.3 H1822.5" /><path d="M1811.7 51.3 V64.4 H1825.5"/><rect x="1815" y="48.0" width="14" height="13.6" rx="1" stroke-width="1.5"/></g><path d="M1816 60.6 L1820.3 52.2 L1823.6 57.2 L1825 55.6 L1828 60.6 Z" fill="#e0e0e0"/><circle cx="1825.6" cy="51.7" r="1.3" fill="#e0e0e0"/></svg>
<svg class="ic" style="left:0;top:0" width="1" height="1"><path d="M1831.9 56.8 L1836.5 61.2 L1841.1 56.8" fill="none" stroke="#e6e6e6" stroke-width="1.7" stroke-linecap="round" stroke-linejoin="round"/></svg>
<div class="btn" style="left:1868px;top:43.5px;width:174px;background:#1d1d1d;border-color:#3a3a3a"></div>
<svg class="ic" style="left:0;top:0" width="1" height="1"><circle cx="1882" cy="55" r="7" fill="none" stroke="#e0e0e0" stroke-width="1.5"/><path d="M1887.2 60.2 L1894.6 67.6" stroke="#e0e0e0" stroke-width="1.6" stroke-linecap="round"/></svg>
<div class="t" style="left:1907px;top:43.5px;color:#6e6e6e">搜索</div>
<div class="btn" style="left:2064.5px;top:43.5px;width:37.5px;border-radius:5px 0 0 5px;border-right:none"></div>
<svg class="ic" style="left:0;top:0" width="1" height="1"><path d="M2067.9 49 H2087.1 L2079.5 58.6 V64 L2075.5 67.4 V58.6 Z" fill="none" stroke="#e0e0e0" stroke-width="1.5" stroke-linejoin="round"/></svg>
<svg class="ic" style="left:0;top:0" width="1" height="1"><path d="M2093.4 56.8 L2098 61.2 L2102.6 56.8" fill="none" stroke="#9a9a9a" stroke-width="1.7" stroke-linecap="round" stroke-linejoin="round"/></svg>
<svg class="ic" style="left:0;top:0" width="1" height="1"><rect x="1768" y="80.10000000000001" width="20" height="5" rx=".6" fill="#e0e0e0"/><path d="M1769.5 86.60000000000001 H1786.5 V98.70000000000002 H1769.5 Z" fill="#e0e0e0"/><rect x="1774.8" y="88.9" width="6.4" height="2.2" rx="1.1" fill="#282828"/></svg>
<div class="t" style="left:1798.5px;top:76.8px;color:#d0d0d0">场景集合</div>
<svg class="ic" style="left:0;top:0" width="1" height="1"><path d="M1772.25 116.15 L1778 121.65 L1783.75 116.15" fill="none" stroke="#d0d0d0" stroke-width="1.5" stroke-linecap="round" stroke-linejoin="round"/></svg>
<div class="a" style="left:1793.5px;top:105.5px;width:28.5px;height:26px;background:#5a5a5a;border-radius:6px;border:1px solid #6a6a6a"></div>
<svg class="ic" style="left:0;top:0" width="1" height="1"><rect x="1797.7" y="108.8" width="20" height="5" rx=".6" fill="#e6e6e6"/><path d="M1799.2 115.3 H1816.2 V127.4 H1799.2 Z" fill="#e6e6e6"/><rect x="1804.5" y="117.6" width="6.4" height="2.2" rx="1.1" fill="#5a5a5a"/></svg>
<div class="t" style="left:1827.5px;top:106.1px;color:#fff"><span class="l">Collection</span></div>
<svg class="ic" style="left:0;top:0" width="1" height="1"><rect x="2008.1000000000001" y="111.10000000000001" width="15.2" height="15.2" rx="1.6" fill="#e0e0e0"/><path d="M2011.1000000000001 118.9 L2014.3 122.3 L2020.5 114.9" stroke="#282828" stroke-width="2.2" fill="none" stroke-linecap="round" stroke-linejoin="round"/></svg>
<svg class="ic" style="left:0;top:0" width="1" height="1"><path d="M2035.2 118.5 Q2045.2 107.5 2055.2 118.5 Q2045.2 129.5 2035.2 118.5 Z" fill="#e0e0e0"/><circle cx="2045.2" cy="118.3" r="4.4" fill="#282828"/><circle cx="2045.2" cy="118.3" r="2.3" fill="#e0e0e0"/></svg>
<svg class="ic" style="left:0;top:0" width="1" height="1"><path d="M2064.7999999999997 114.60000000000001 Q2064.7999999999997 113.4 2066.0 113.4 H2069.6 L2071.2 110.80000000000001 H2078.0 L2079.6 113.4 H2083.2 Q2084.4 113.4 2084.4 114.60000000000001 V127.0 H2064.7999999999997 Z" fill="#e0e0e0"/><circle cx="2074.6" cy="120.0" r="5.2" fill="#282828"/><circle cx="2074.6" cy="120.0" r="3.2" fill="none" stroke="#e0e0e0" stroke-width="1.5"/></svg>
<div class="a" style="left:1777px;top:140px;width:1px;height:118px;background:#4a4a4a"></div>
<div class="a" style="left:1739px;top:163.3px;width:362px;height:26.8px;background:#334d80;border-radius:4px"></div>
<div class="a" style="left:1777px;top:163.3px;width:1px;height:26.8px;background:#6d7fa6"></div>
<svg class="ic" style="left:0;top:0" width="1" height="1"><g stroke="#aab4cc" stroke-width="1.5" fill="none"><rect x="1742.6" y="170.6" width="4.6" height="4.6" rx=".8"/><rect x="1742.6" y="182.1" width="4.6" height="4.6" rx=".8"/><rect x="1756.1999999999998" y="182.1" width="4.6" height="4.6" rx=".8"/><path d="M1744.8999999999999 175.2 V182.1 M1747.1999999999998 184.4 H1756.1999999999998 M1758.5 182.1 V176.6 M1747.1999999999998 172.9 H1753.6"/></g><rect x="1754.8999999999999" y="168.2" width="7.6" height="7.6" rx="1" fill="#e6e6e6"/></svg>
<svg class="ic" style="left:0;top:0" width="1" height="1"><path d="M1802.75 141.29999999999998 L1810.25 147.79999999999998 L1802.75 154.29999999999998" fill="none" stroke="#d0d0d0" stroke-width="1.5" stroke-linecap="round" stroke-linejoin="round"/></svg>
<svg class="ic" style="left:0;top:0" width="1" height="1"><path d="M1828.4 138.6 H1845.6 L1837 156.0 Z" fill="none" stroke="#c88650" stroke-width="3.4" stroke-linejoin="round"/></svg>
<div class="t" style="left:1856.5px;top:135.4px;color:#c8c8c8"><span class="l">Cube</span></div>
<svg class="ic" style="left:0;top:0" width="1" height="1"><g transform="translate(1941 147.2) rotate(45)"><path d="M-2.6 -5 V-10.4 A5.8 5.8 0 1 0 2.6 -10.4 V-5 Z M-2.2 -1.2 L-2.4 8.6 A2.4 2.4 0 0 0 2.4 8.6 L2.2 -1.2" fill="none" stroke="none"/><path d="M-2.5 -9.8 V-5.6 H2.5 V-9.8 A5.4 5.4 0 0 1 2.6 0 L2.5 8.2 A2.5 2.5 0 0 1 -2.5 8.2 L-2.6 0 A5.4 5.4 0 0 1 -2.5 -9.8 Z" fill="none" stroke="#6b8fd8" stroke-width="1.6" stroke-linejoin="round"/></g></svg>
<svg class="ic" style="left:0;top:0" width="1" height="1"><g stroke="#14b88a" stroke-width="1.5" fill="none"><rect x="1960.8" y="138.2" width="4.4" height="4.4" rx=".6"/><rect x="1974.8" y="138.2" width="4.4" height="4.4" rx=".6"/><rect x="1967.8" y="152.0" width="4.4" height="4.4" rx=".6"/><path d="M1965.2 140.39999999999998 H1974.8 M1963.6 142.6 L1968.6 152.0 M1976.4 142.6 L1971.4 152.0"/></g></svg>
<svg class="ic" style="left:0;top:0" width="1" height="1"><path d="M2035.2 147.2 Q2045.2 136.2 2055.2 147.2 Q2045.2 158.2 2035.2 147.2 Z" fill="#e6e6e6"/><circle cx="2045.2" cy="147.0" r="4.4" fill="#282828"/><circle cx="2045.2" cy="147.0" r="2.3" fill="#e6e6e6"/></svg>
<svg class="ic" style="left:0;top:0" width="1" height="1"><path d="M2064.7999999999997 143.49999999999997 Q2064.7999999999997 142.29999999999998 2066.0 142.29999999999998 H2069.6 L2071.2 139.7 H2078.0 L2079.6 142.29999999999998 H2083.2 Q2084.4 142.29999999999998 2084.4 143.49999999999997 V155.89999999999998 H2064.7999999999997 Z" fill="#e6e6e6"/><circle cx="2074.6" cy="148.89999999999998" r="5.2" fill="#282828"/><circle cx="2074.6" cy="148.89999999999998" r="3.2" fill="none" stroke="#e6e6e6" stroke-width="1.5"/></svg>
<svg class="ic" style="left:0;top:0" width="1" height="1"><path d="M1802.75 170.6 L1810.25 177.1 L1802.75 183.6" fill="none" stroke="#d0d0d0" stroke-width="1.5" stroke-linecap="round" stroke-linejoin="round"/></svg>
<div class="a" style="left:1822px;top:163.6px;width:29px;height:26.2px;background:#5b6d97;border-radius:6px;border:1px solid #7080a6"></div>
<div class="a" style="left:1964px;top:163.6px;width:28.5px;height:26.2px;background:#2b5f7e;border-radius:6px;border:1px solid #3a7088"></div>
<svg class="ic" style="left:0;top:0" width="1" height="1"><path d="M1832.5 168.7 C1847.5 167.1 1847.5 184.1 1830.0 185.29999999999998" fill="none" stroke="#d08a4e" stroke-width="3.4" stroke-linecap="round"/></svg>
<div class="t" style="left:1856.5px;top:164.70000000000002px;color:#ffaa28"><span class="l">Cube<span class="d">.001</span></span></div>
<svg class="ic" style="left:0;top:0" width="1" height="1"><g transform="translate(1978.5 176.5) scale(1.0) translate(-1978.5 -176.5)" stroke="#14b88a" stroke-width="1.5" fill="none"><rect x="1975.7" y="167.5" width="4.2" height="4.2" rx=".6"/><rect x="1970.3" y="180.7" width="4.2" height="4.2" rx=".6"/><path d="M1979.9 169.5 C1989.5 169.5 1989.5 182.9 1974.5 182.9"/></g></svg>
<svg class="ic" style="left:0;top:0" width="1" height="1"><path d="M2035.2 176.5 Q2045.2 165.5 2055.2 176.5 Q2045.2 187.5 2035.2 176.5 Z" fill="#e6e6e6"/><circle cx="2045.2" cy="176.3" r="4.4" fill="#334d80"/><circle cx="2045.2" cy="176.3" r="2.3" fill="#e6e6e6"/></svg>
<svg class="ic" style="left:0;top:0" width="1" height="1"><path d="M2064.7999999999997 172.79999999999998 Q2064.7999999999997 171.6 2066.0 171.6 H2069.6 L2071.2 169.0 H2078.0 L2079.6 171.6 H2083.2 Q2084.4 171.6 2084.4 172.79999999999998 V185.2 H2064.7999999999997 Z" fill="#e6e6e6"/><circle cx="2074.6" cy="178.2" r="5.2" fill="#334d80"/><circle cx="2074.6" cy="178.2" r="3.2" fill="none" stroke="#e6e6e6" stroke-width="1.5"/></svg>
<svg class="ic" style="left:0;top:0" width="1" height="1"><path d="M1802.75 199.89999999999998 L1810.25 206.39999999999998 L1802.75 212.89999999999998" fill="none" stroke="#d0d0d0" stroke-width="1.5" stroke-linecap="round" stroke-linejoin="round"/></svg>
<svg class="ic" style="left:0;top:0" width="1" height="1"><path d="M1828.4 197.2 H1845.6 L1837 214.6 Z" fill="none" stroke="#c88650" stroke-width="3.4" stroke-linejoin="round"/></svg>
<div class="t" style="left:1856.5px;top:194.0px;color:#c8c8c8">柱体</div>
<svg class="ic" style="left:0;top:0" width="1" height="1"><g transform="translate(1933 205.79999999999998) rotate(45)"><path d="M-2.6 -5 V-10.4 A5.8 5.8 0 1 0 2.6 -10.4 V-5 Z M-2.2 -1.2 L-2.4 8.6 A2.4 2.4 0 0 0 2.4 8.6 L2.2 -1.2" fill="none" stroke="none"/><path d="M-2.5 -9.8 V-5.6 H2.5 V-9.8 A5.4 5.4 0 0 1 2.6 0 L2.5 8.2 A2.5 2.5 0 0 1 -2.5 8.2 L-2.6 0 A5.4 5.4 0 0 1 -2.5 -9.8 Z" fill="none" stroke="#6b8fd8" stroke-width="1.6" stroke-linejoin="round"/></g></svg>
<svg class="ic" style="left:0;top:0" width="1" height="1"><g stroke="#14b88a" stroke-width="1.5" fill="none"><rect x="1952.8" y="196.79999999999998" width="4.4" height="4.4" rx=".6"/><rect x="1966.8" y="196.79999999999998" width="4.4" height="4.4" rx=".6"/><rect x="1959.8" y="210.6" width="4.4" height="4.4" rx=".6"/><path d="M1957.2 198.99999999999997 H1966.8 M1955.6 201.2 L1960.6 210.6 M1968.4 201.2 L1963.4 210.6"/></g></svg>
<svg class="ic" style="left:0;top:0" width="1" height="1"><path d="M2035.2 205.79999999999998 Q2045.2 194.79999999999998 2055.2 205.79999999999998 Q2045.2 216.79999999999998 2035.2 205.79999999999998 Z" fill="#e6e6e6"/><circle cx="2045.2" cy="205.6" r="4.4" fill="#282828"/><circle cx="2045.2" cy="205.6" r="2.3" fill="#e6e6e6"/></svg>
<svg class="ic" style="left:0;top:0" width="1" height="1"><path d="M2064.7999999999997 202.09999999999997 Q2064.7999999999997 200.89999999999998 2066.0 200.89999999999998 H2069.6 L2071.2 198.29999999999998 H2078.0 L2079.6 200.89999999999998 H2083.2 Q2084.4 200.89999999999998 2084.4 202.09999999999997 V214.49999999999997 H2064.7999999999997 Z" fill="#e6e6e6"/><circle cx="2074.6" cy="207.49999999999997" r="5.2" fill="#282828"/><circle cx="2074.6" cy="207.49999999999997" r="3.2" fill="none" stroke="#e6e6e6" stroke-width="1.5"/></svg>
<svg class="ic" style="left:0;top:0" width="1" height="1"><path d="M1802.75 229.2 L1810.25 235.7 L1802.75 242.2" fill="none" stroke="#d0d0d0" stroke-width="1.5" stroke-linecap="round" stroke-linejoin="round"/></svg>
<svg class="ic" style="left:0;top:0" width="1" height="1"><path d="M1828.4 226.5 H1845.6 L1837 243.9 Z" fill="none" stroke="#c88650" stroke-width="3.4" stroke-linejoin="round"/></svg>
<div class="t" style="left:1856.5px;top:223.3px;color:#c8c8c8">柱体<span class="l"><span class="d">.001</span></span></div>
<svg class="ic" style="left:0;top:0" width="1" height="1"><g transform="translate(1970 235.1) rotate(45)"><path d="M-2.6 -5 V-10.4 A5.8 5.8 0 1 0 2.6 -10.4 V-5 Z M-2.2 -1.2 L-2.4 8.6 A2.4 2.4 0 0 0 2.4 8.6 L2.2 -1.2" fill="none" stroke="none"/><path d="M-2.5 -9.8 V-5.6 H2.5 V-9.8 A5.4 5.4 0 0 1 2.6 0 L2.5 8.2 A2.5 2.5 0 0 1 -2.5 8.2 L-2.6 0 A5.4 5.4 0 0 1 -2.5 -9.8 Z" fill="none" stroke="#6b8fd8" stroke-width="1.6" stroke-linejoin="round"/></g></svg>
<svg class="ic" style="left:0;top:0" width="1" height="1"><g stroke="#14b88a" stroke-width="1.5" fill="none"><rect x="1989.8" y="226.5" width="4.2" height="4.2" rx=".6"/><rect x="1996.6" y="240.1" width="4.2" height="4.2" rx=".6"/><path d="M1994 228.5 H2001.4 M1992.6 230.7 L1998 240.1"/></g></svg>
<svg class="ic" style="left:0;top:0" width="1" height="1"><path d="M2035.2 235.1 Q2045.2 224.1 2055.2 235.1 Q2045.2 246.1 2035.2 235.1 Z" fill="#e6e6e6"/><circle cx="2045.2" cy="234.9" r="4.4" fill="#282828"/><circle cx="2045.2" cy="234.9" r="2.3" fill="#e6e6e6"/></svg>
<svg class="ic" style="left:0;top:0" width="1" height="1"><path d="M2064.7999999999997 231.39999999999998 Q2064.7999999999997 230.2 2066.0 230.2 H2069.6 L2071.2 227.6 H2078.0 L2079.6 230.2 H2083.2 Q2084.4 230.2 2084.4 231.39999999999998 V243.79999999999998 H2064.7999999999997 Z" fill="#e6e6e6"/><circle cx="2074.6" cy="236.79999999999998" r="5.2" fill="#282828"/><circle cx="2074.6" cy="236.79999999999998" r="3.2" fill="none" stroke="#e6e6e6" stroke-width="1.5"/></svg>
<div class="a" style="left:1736px;top:248px;width:366px;height:6px;overflow:hidden">
<div class="a" style="left:-1736px;top:-248px;width:2106px;height:300px">
<svg class="ic" style="left:0;top:0" width="1" height="1"><path d="M1802.75 257.5 L1810.25 264.0 L1802.75 270.5" fill="none" stroke="#d0d0d0" stroke-width="1.5" stroke-linecap="round" stroke-linejoin="round"/></svg>
<svg class="ic" style="left:0;top:0" width="1" height="1"><path d="M1828.4 255.4 H1845.6 L1837 272.8 Z" fill="none" stroke="#c88650" stroke-width="3.4" stroke-linejoin="round"/></svg>
<svg class="ic" style="left:0;top:0" width="1" height="1"><g transform="translate(1970 264.0) rotate(45)"><path d="M-2.6 -5 V-10.4 A5.8 5.8 0 1 0 2.6 -10.4 V-5 Z M-2.2 -1.2 L-2.4 8.6 A2.4 2.4 0 0 0 2.4 8.6 L2.2 -1.2" fill="none" stroke="none"/><path d="M-2.5 -9.8 V-5.6 H2.5 V-9.8 A5.4 5.4 0 0 1 2.6 0 L2.5 8.2 A2.5 2.5 0 0 1 -2.5 8.2 L-2.6 0 A5.4 5.4 0 0 1 -2.5 -9.8 Z" fill="none" stroke="#6b8fd8" stroke-width="1.6" stroke-linejoin="round"/></g></svg>
<svg class="ic" style="left:0;top:0" width="1" height="1"><g stroke="#14b88a" stroke-width="1.5" fill="none"><rect x="1989.8" y="255.4" width="4.2" height="4.2" rx=".6"/><rect x="1996.6" y="269.0" width="4.2" height="4.2" rx=".6"/><path d="M1994 257.4 H2001.4 M1992.6 259.6 L1998 269.0"/></g></svg>
<svg class="ic" style="left:0;top:0" width="1" height="1"><path d="M2035.2 264.0 Q2045.2 253.0 2055.2 264.0 Q2045.2 275.0 2035.2 264.0 Z" fill="#e0e0e0"/><circle cx="2045.2" cy="263.8" r="4.4" fill="#282828"/><circle cx="2045.2" cy="263.8" r="2.3" fill="#e0e0e0"/></svg>
<svg class="ic" style="left:0;top:0" width="1" height="1"><path d="M2064.7999999999997 259.7 Q2064.7999999999997 258.5 2066.0 258.5 H2069.6 L2071.2 255.9 H2078.0 L2079.6 258.5 H2083.2 Q2084.4 258.5 2084.4 259.7 V272.1 H2064.7999999999997 Z" fill="#e0e0e0"/><circle cx="2074.6" cy="265.1" r="5.2" fill="#282828"/><circle cx="2074.6" cy="265.1" r="3.2" fill="none" stroke="#e0e0e0" stroke-width="1.5"/></svg>
</div></div>
<svg class="ic" style="left:0;top:0" width="1" height="1"><defs><linearGradient id="bkg" gradientUnits="userSpaceOnUse" x1="2062" y1="152" x2="2100" y2="222"><stop offset="0" stop-color="#72cde4"/><stop offset=".55" stop-color="#a3a6e2"/><stop offset="1" stop-color="#f492c6"/></linearGradient></defs><circle cx="2089" cy="185" r="33" fill="rgba(118,118,118,.82)" stroke="url(#bkg)" stroke-width="6"/><g stroke="#050505" fill="none" stroke-linecap="round" stroke-linejoin="round"><path d="M2071.5 179.5 L2083 187" stroke-width="6.2"/><path d="M2075.5 172.8 L2085.5 176.6" stroke-width="5.2"/><path d="M2089.5 178 L2103 172.2" stroke-width="5.6"/><path d="M2083.4 195.5 V202.5" stroke-width="5"/><path d="M2095 189 V202.5" stroke-width="6"/><path d="M2101.5 186 L2108 182.4" stroke-width="5"/></g></svg>
<div class="area" style="left:1734px;top:264px;width:369px;height:972px;background:#303030;border:1px solid #3a3a3a">
<div class="a" style="left:0;top:37px;width:42.5px;height:940px;background:#181818"></div>
</div>
<div class="a" style="left:1739.5px;top:314px;width:38.5px;height:39.6px;background:#303030;border-radius:5px 0 0 5px"></div>
<div class="a" style="left:1739.5px;top:366px;width:38.5px;height:199.6px;background:#1d1d1d;border-radius:5px 0 0 5px"></div>
<div class="a" style="left:1739.5px;top:577px;width:38.5px;height:39.6px;background:#1d1d1d;border-radius:5px 0 0 5px"></div>
<div class="a" style="left:1739.5px;top:630px;width:38.5px;height:239.6px;background:#1d1d1d;border-radius:5px 0 0 5px"></div>
<div class="a" style="left:1739.5px;top:405.5px;width:38.5px;height:1px;background:#181818"></div>
<div class="a" style="left:1739.5px;top:445.5px;width:38.5px;height:1px;background:#181818"></div>
<div class="a" style="left:1739.5px;top:485.5px;width:38.5px;height:1px;background:#181818"></div>
<div class="a" style="left:1739.5px;top:525.5px;width:38.5px;height:1px;background:#181818"></div>
<div class="a" style="left:1739.5px;top:669.5px;width:38.5px;height:1px;background:#181818"></div>
<div class="a" style="left:1739.5px;top:709.5px;width:38.5px;height:1px;background:#181818"></div>
<div class="a" style="left:1739.5px;top:749.5px;width:38.5px;height:1px;background:#181818"></div>
<div class="a" style="left:1739.5px;top:789.5px;width:38.5px;height:1px;background:#181818"></div>
<div class="a" style="left:1739.5px;top:829.5px;width:38.5px;height:1px;background:#181818"></div>
<div class="a" style="left:1739.5px;top:790px;width:38.5px;height:39.6px;background:#303030;border-radius:5px 0 0 5px"></div>
<svg class="ic" style="left:0;top:0" width="1" height="1"><path d="M1751.8 324.1 V332.6" stroke="#e0e0e0" stroke-width="1.6"/><rect x="1748.3999999999999" y="333.6" width="6.8" height="9.6" rx="3.2" fill="#e0e0e0"/><path d="M1761.8 324.0 V328.20000000000005 H1766.3999999999999 V324.0 A5 5 0 0 1 1766.1 332.40000000000003 V341.6 A2 2 0 0 1 1762.1 341.6 V332.40000000000003 A5 5 0 0 1 1761.8 324.0 Z" fill="#e0e0e0"/></svg>
<svg class="ic" style="left:0;top:0" width="1" height="1"><path d="M1748.3 380.4 H1752.3999999999999 L1753.8 376.59999999999997 H1761.2 L1762.6 380.4 H1769.3 V395.0 H1748.3 Z" fill="none" stroke="#b4b4b4" stroke-width="1.6" stroke-linejoin="round"/><rect x="1754.3999999999999" y="376.59999999999997" width="6.4" height="2.8" fill="#b4b4b4"/><path d="M1751.2 384.0 H1763.2 M1751.2 387.4 H1763.2 M1751.2 390.79999999999995 H1763.2" stroke="#b4b4b4" stroke-width="1.5"/><circle cx="1766.3999999999999" cy="384.4" r="1.3" fill="#b4b4b4"/><circle cx="1766.3999999999999" cy="390.4" r="1.3" fill="#b4b4b4"/><path d="M1764.2 377.0 H1767.3999999999999" stroke="#b4b4b4" stroke-width="1.4"/></svg>
<svg class="ic" style="left:0;top:0" width="1" height="1"><path d="M1748.2 427.0 V418.6 Q1748.2 416.0 1750.8 416.0 H1766.8 Q1769.3999999999999 416.0 1769.3999999999999 418.6 V427.0 H1765.3999999999999 V422.0 H1752.2 V427.0 Z" fill="#b4b4b4"/><rect x="1753.3999999999999" y="423.6" width="10.8" height="12" fill="#b4b4b4"/><path d="M1754.8 434.20000000000005 L1758.8 428.20000000000005 L1762.8 434.20000000000005 Z" fill="#1b1b1b"/><circle cx="1761.8" cy="426.6" r="1.1" fill="#1b1b1b"/></svg>
<svg class="ic" style="left:0;top:0" width="1" height="1"><g fill="none" stroke="#b4b4b4" stroke-width="1.3" stroke-linejoin="round"><path d="M1748.9 462.5 V475.8 H1762.7" /><path d="M1751.9 459.8 V472.9 H1765.7"/><rect x="1755.2" y="456.5" width="14" height="13.6" rx="1" stroke-width="1.5"/></g><path d="M1756.2 469.1 L1760.5 460.7 L1763.8 465.7 L1765.2 464.1 L1768.2 469.1 Z" fill="#b4b4b4"/><circle cx="1765.8" cy="460.2" r="1.3" fill="#b4b4b4"/></svg>
<svg class="ic" style="left:0;top:0" width="1" height="1"><path d="M1752.1999999999998 497.40000000000003 Q1753.4999999999998 496.3 1754.4999999999998 497.8 L1757.8999999999999 506.6 L1755.8999999999999 512.8000000000001 Q1750.8999999999999 514.2 1746.3 511.6 Z" fill="#b4b4b4"/><circle cx="1764.1" cy="499.20000000000005" r="3" fill="#b4b4b4"/><circle cx="1760.8999999999999" cy="511.20000000000005" r="5.1" fill="#1d1d1d" stroke="#b4b4b4" stroke-width="1.5"/><path d="M1758.1999999999998 510.6 A3 3 0 0 1 1760.4999999999998 508.40000000000003" stroke="#b4b4b4" stroke-width="1.2" fill="none" stroke-linecap="round"/></svg>
<svg class="ic" style="left:0;top:0" width="1" height="1"><circle cx="1758.8" cy="545.6" r="9.2" fill="none" stroke="#c2606c" stroke-width="1.6"/><path d="M1748.2 556.2 L1769.8 534.6" stroke="#c2606c" stroke-width="1.5"/><path d="M1754.3 538.1 Q1758.3 539.6 1761.2 537.8000000000001 Q1760.3999999999999 542.0 1757.6 543.2 Q1755.3999999999999 544.2 1752.8 543.0 Q1751.0 541.6 1754.3 538.1 Z M1757.8 546.2 Q1761.8 545.0 1764.3999999999999 547.6 Q1764.8 550.6 1761.3999999999999 553.2 Q1759.3999999999999 550.6 1757.3999999999999 549.0 Z" fill="#c2606c"/></svg>
<svg class="ic" style="left:0;top:0" width="1" height="1"><g fill="none" stroke="#e0e0e0" stroke-width="1.6"><rect x="1748.7" y="587.8" width="20.2" height="4.6"/><path d="M1750.3 592.6 V606 H1767.3 V592.6"/></g><rect x="1755.3" y="595.6" width="7" height="2.6" rx="1.3" fill="#e0e0e0"/></svg>
<svg class="ic" style="left:0;top:0" width="1" height="1"><rect x="1753.0" y="644.2" width="11.6" height="11.6" fill="#d58c4c"/><g fill="none" stroke="#d58c4c" stroke-width="1.4" opacity=".8"><path d="M1748.3999999999999 643.6 V639.6 H1752.3999999999999"/><path d="M1769.2 643.6 V639.6 H1765.2"/><path d="M1748.3999999999999 656.4 V660.4 H1752.3999999999999"/><path d="M1769.2 656.4 V660.4 H1765.2"/></g></svg>
<svg class="ic" style="left:0;top:0" width="1" height="1"><g transform="translate(1758.8 690.4) rotate(45)"><path d="M-2.6 -5 V-10.4 A5.8 5.8 0 1 0 2.6 -10.4 V-5 Z M-2.2 -1.2 L-2.4 8.6 A2.4 2.4 0 0 0 2.4 8.6 L2.2 -1.2" fill="none" stroke="none"/><path d="M-2.5 -9.8 V-5.6 H2.5 V-9.8 A5.4 5.4 0 0 1 2.6 0 L2.5 8.2 A2.5 2.5 0 0 1 -2.5 8.2 L-2.6 0 A5.4 5.4 0 0 1 -2.5 -9.8 Z" fill="#6b8fd8" stroke="#6b8fd8" stroke-width="1.2" stroke-linejoin="round"/></g></svg>
<svg class="ic" style="left:0;top:0" width="1" height="1"><path d="M1763.2 722.0 A9 9 0 1 0 1767.2 733.2" fill="none" stroke="#6b8fd8" stroke-width="1.6" stroke-linecap="round"/><circle cx="1758.2" cy="730.2" r="4" fill="#6b8fd8"/><circle cx="1766.3999999999999" cy="723.0" r="2.4" fill="#6b8fd8"/></svg>
<svg class="ic" style="left:0;top:0" width="1" height="1"><g transform="translate(1758.8 769.6) rotate(-38)"><path d="M-10.6 0.4 A7.6 7.6 0 0 1 -3 -7.4 L8 -5 A4.8 4.8 0 0 1 8 5 L-3 7.8 A7.6 7.6 0 0 1 -10.6 0.4 Z" fill="none" stroke="#6b8fd8" stroke-width="1.6"/><circle cx="-3.4" cy="0.2" r="4.4" fill="none" stroke="#6b8fd8" stroke-width="1.6"/><circle cx="-3.4" cy="0.2" r="1.8" fill="#6b8fd8"/></g></svg>
<svg class="ic" style="left:0;top:0" width="1" height="1"><g transform="translate(1758.2 809.6) scale(1.15) translate(-1758.2 -809.6)" stroke="#14c89a" stroke-width="1.3043478260869565" fill="none"><rect x="1755.4" y="800.6" width="4.2" height="4.2" rx=".6"/><rect x="1750.0" y="813.8000000000001" width="4.2" height="4.2" rx=".6"/><path d="M1759.6000000000001 802.6 C1769.2 802.6 1769.2 816.0 1754.2 816.0"/></g></svg>
<svg class="ic" style="left:0;top:0" width="1" height="1"><circle cx="1758.8" cy="849.8" r="9" fill="none" stroke="#c2606c" stroke-width="1.6"/><path d="M1758.8 849.8 V840.8 A9 9 0 0 0 1749.8 849.8 Z" fill="#c2606c"/><path d="M1758.8 849.8 V858.8 A9 9 0 0 0 1767.8 849.8 Z" fill="#c2606c"/></svg>
<svg class="ic" style="left:0;top:0" width="1" height="1"><path d="M1751.4 900.8 L1756 905.2 L1760.6 900.8" fill="none" stroke="#4a4a4a" stroke-width="1.5" stroke-linecap="round" stroke-linejoin="round"/></svg>
<div class="btn" style="left:1747.5px;top:268.5px;width:45px"></div>
<svg class="ic" style="left:0;top:0" width="1" height="1"><rect x="1754.5" y="273.5" width="21" height="7.6" rx="3.8" fill="#e0e0e0"/><rect x="1754.5" y="283.9" width="21" height="7.6" rx="3.8" fill="#e0e0e0"/><rect x="1756.9" y="275.3" width="9" height="4" rx="2" fill="#282828"/><rect x="1764.1" y="285.7" width="9" height="4" rx="2" fill="#282828"/></svg>
<svg class="ic" style="left:0;top:0" width="1" height="1"><path d="M1778.9 280.8 L1783.5 285.2 L1788.1 280.8" fill="none" stroke="#e6e6e6" stroke-width="1.7" stroke-linecap="round" stroke-linejoin="round"/></svg>
<div class="btn" style="left:1830.5px;top:268.5px;width:173px;background:#1d1d1d;border-color:#3a3a3a"></div>
<svg class="ic" style="left:0;top:0" width="1" height="1"><circle cx="1845" cy="280" r="7" fill="none" stroke="#e0e0e0" stroke-width="1.5"/><path d="M1850.2 285.2 L1857.6 292.6" stroke="#e0e0e0" stroke-width="1.6" stroke-linecap="round"/></svg>
<div class="t" style="left:1869px;top:268px;color:#6e6e6e">搜索</div>
<div class="btn" style="left:2062.5px;top:268.5px;width:28px"></div>
<svg class="ic" style="left:0;top:0" width="1" height="1"><path d="M2071.9 281.3 L2076.5 285.7 L2081.1 281.3" fill="none" stroke="#e6e6e6" stroke-width="1.7" stroke-linecap="round" stroke-linejoin="round"/></svg>
<svg class="ic" style="left:0;top:0" width="1" height="1"><rect x="1798.4" y="322.9" width="11.2" height="11.2" fill="#e0e0e0"/><g fill="none" stroke="#e0e0e0" stroke-width="1.4" opacity=".75"><path d="M1793.8 322.1 V318.3 H1797.6"/><path d="M1814.2 322.1 V318.3 H1810.4"/><path d="M1793.8 334.9 V338.7 H1797.6"/><path d="M1814.2 334.9 V338.7 H1810.4"/></g></svg>
<div class="t" style="left:1829px;top:314px"><span class="l">Cube<span class="d">.0...</span></span></div>
<svg class="ic" style="left:0;top:0" width="1" height="1"><path d="M1912.25 322.0 L1919.75 328.5 L1912.25 335.0" fill="none" stroke="#d0d0d0" stroke-width="1.5" stroke-linecap="round" stroke-linejoin="round"/></svg>
<svg class="ic" style="left:0;top:0" width="1" height="1"><g transform="translate(1945.5 329) scale(1.0) translate(-1945.5 -329)" stroke="#e0e0e0" stroke-width="1.5" fill="none"><rect x="1942.7" y="320" width="4.2" height="4.2" rx=".6"/><rect x="1937.3" y="333.2" width="4.2" height="4.2" rx=".6"/><path d="M1946.9 322 C1956.5 322 1956.5 335.4 1941.5 335.4"/></g></svg>
<div class="t" style="left:1969px;top:314px"><span class="l">Cube<span class="d">.0...</span></span></div>
<svg class="ic" style="left:0;top:0" width="1" height="1"><g transform="translate(2076 328) rotate(45)" fill="none" stroke="#a0a0a0" stroke-width="1.4" stroke-linejoin="round" stroke-linecap="round"><path d="M-3.2 -10.5 H3.2 L2.6 -3.5 Q6.5 -1.5 6.2 1.6 H-6.2 Q-6.5 -1.5 -2.6 -3.5 Z"/><path d="M0 1.8 V11"/></g></svg>
<div class="btn" style="left:1790px;top:367.5px;width:301px;overflow:hidden;border-color:#3e3e3e"><div class="a" style="left:44.5px;top:-1px;width:226px;height:28px;background:#1d1d1d;border-left:1px solid #3e3e3e"></div><div class="a" style="left:270.5px;top:-1px;width:30px;height:28px;background:#545454"></div></div>
<svg class="ic" style="left:0;top:0" width="1" height="1"><g transform="translate(1808 381.5) scale(1.0) translate(-1808 -381.5)" stroke="#e0e0e0" stroke-width="1.5" fill="none"><rect x="1805.2" y="372.5" width="4.2" height="4.2" rx=".6"/><rect x="1799.8" y="385.7" width="4.2" height="4.2" rx=".6"/><path d="M1809.4 374.5 C1819 374.5 1819 387.9 1804 387.9"/></g></svg>
<svg class="ic" style="left:0;top:0" width="1" height="1"><path d="M1821.9 380.3 L1826.5 384.7 L1831.1 380.3" fill="none" stroke="#e6e6e6" stroke-width="1.7" stroke-linecap="round" stroke-linejoin="round"/></svg>
<div class="t" style="left:1847px;top:367px"><span class="l">Cube<span class="d">.001</span></span></div>
<svg class="ic" style="left:0;top:0" width="1" height="1"><path d="M2076 372.1 Q2081 374.9 2085.4 374.9 Q2086 387.1 2076 391.5 Q2066 387.1 2066.6 374.9 Q2071 374.9 2076 372.1 Z" fill="none" stroke="#c8c8c8" stroke-width="1.4"/></svg>
<div class="a" style="left:1789px;top:410px;width:301.5px;height:36px;background:#3d3d3d;border:1px solid #4a4a4a;border-radius:6px"></div><svg class="ic" style="left:0;top:0" width="1" height="1"><path d="M1803.25 421.5 L1810.75 428 L1803.25 434.5" fill="none" stroke="#d8d8d8" stroke-width="1.5" stroke-linecap="round" stroke-linejoin="round"/></svg><div class="t" style="left:1819.5px;top:415.2px">形状</div><svg class="ic" style="left:0;top:0" width="1" height="1"><rect x="2060.0" y="424.8" width="1.6" height="1.6" fill="#6a6a6a"/><rect x="2060.0" y="429.40000000000003" width="1.6" height="1.6" fill="#6a6a6a"/><rect x="2064.6" y="424.8" width="1.6" height="1.6" fill="#6a6a6a"/><rect x="2064.6" y="429.40000000000003" width="1.6" height="1.6" fill="#6a6a6a"/><rect x="2069.2" y="424.8" width="1.6" height="1.6" fill="#6a6a6a"/><rect x="2069.2" y="429.40000000000003" width="1.6" height="1.6" fill="#6a6a6a"/><rect x="2073.8" y="424.8" width="1.6" height="1.6" fill="#6a6a6a"/><rect x="2073.8" y="429.40000000000003" width="1.6" height="1.6" fill="#6a6a6a"/></svg>
<div class="a" style="left:1789px;top:448px;width:301.5px;height:36px;background:#3d3d3d;border:1px solid #4a4a4a;border-radius:6px"></div><svg class="ic" style="left:0;top:0" width="1" height="1"><path d="M1803.25 459.5 L1810.75 466 L1803.25 472.5" fill="none" stroke="#d8d8d8" stroke-width="1.5" stroke-linecap="round" stroke-linejoin="round"/></svg><div class="t" style="left:1819.5px;top:453.2px">纹理空间</div><svg class="ic" style="left:0;top:0" width="1" height="1"><rect x="2060.0" y="462.8" width="1.6" height="1.6" fill="#6a6a6a"/><rect x="2060.0" y="467.40000000000003" width="1.6" height="1.6" fill="#6a6a6a"/><rect x="2064.6" y="462.8" width="1.6" height="1.6" fill="#6a6a6a"/><rect x="2064.6" y="467.40000000000003" width="1.6" height="1.6" fill="#6a6a6a"/><rect x="2069.2" y="462.8" width="1.6" height="1.6" fill="#6a6a6a"/><rect x="2069.2" y="467.40000000000003" width="1.6" height="1.6" fill="#6a6a6a"/><rect x="2073.8" y="462.8" width="1.6" height="1.6" fill="#6a6a6a"/><rect x="2073.8" y="467.40000000000003" width="1.6" height="1.6" fill="#6a6a6a"/></svg>
<div class="a" style="left:1789px;top:486px;width:301.5px;height:442px;background:#3d3d3d;border:1px solid #4a4a4a;border-radius:6px"></div><svg class="ic" style="left:0;top:0" width="1" height="1"><path d="M1802.02 501.64 L1808 507.36 L1813.98 501.64" fill="none" stroke="#d8d8d8" stroke-width="1.5" stroke-linecap="round" stroke-linejoin="round"/></svg><div class="t" style="left:1819.5px;top:491.2px">几何数据</div><svg class="ic" style="left:0;top:0" width="1" height="1"><rect x="2060.0" y="500.8" width="1.6" height="1.6" fill="#6a6a6a"/><rect x="2060.0" y="505.40000000000003" width="1.6" height="1.6" fill="#6a6a6a"/><rect x="2064.6" y="500.8" width="1.6" height="1.6" fill="#6a6a6a"/><rect x="2064.6" y="505.40000000000003" width="1.6" height="1.6" fill="#6a6a6a"/><rect x="2069.2" y="500.8" width="1.6" height="1.6" fill="#6a6a6a"/><rect x="2069.2" y="505.40000000000003" width="1.6" height="1.6" fill="#6a6a6a"/><rect x="2073.8" y="500.8" width="1.6" height="1.6" fill="#6a6a6a"/><rect x="2073.8" y="505.40000000000003" width="1.6" height="1.6" fill="#6a6a6a"/></svg>
<div class="a" style="left:1789px;top:930px;width:301.5px;height:36px;background:#3d3d3d;border:1px solid #4a4a4a;border-radius:6px"></div><svg class="ic" style="left:0;top:0" width="1" height="1"><path d="M1803.25 941.5 L1810.75 948 L1803.25 954.5" fill="none" stroke="#d8d8d8" stroke-width="1.5" stroke-linecap="round" stroke-linejoin="round"/></svg><div class="a" style="left:1819px;top:938.5px;width:19px;height:19px;background:#545454;border-radius:4px"></div><div class="t" style="left:1842px;top:935.2px">路径动画</div><svg class="ic" style="left:0;top:0" width="1" height="1"><rect x="2060.0" y="944.8" width="1.6" height="1.6" fill="#6a6a6a"/><rect x="2060.0" y="949.4" width="1.6" height="1.6" fill="#6a6a6a"/><rect x="2064.6" y="944.8" width="1.6" height="1.6" fill="#6a6a6a"/><rect x="2064.6" y="949.4" width="1.6" height="1.6" fill="#6a6a6a"/><rect x="2069.2" y="944.8" width="1.6" height="1.6" fill="#6a6a6a"/><rect x="2069.2" y="949.4" width="1.6" height="1.6" fill="#6a6a6a"/><rect x="2073.8" y="944.8" width="1.6" height="1.6" fill="#6a6a6a"/><rect x="2073.8" y="949.4" width="1.6" height="1.6" fill="#6a6a6a"/></svg>
<div class="a" style="left:1789px;top:968.5px;width:301.5px;height:35.5px;background:#3d3d3d;border:1px solid #4a4a4a;border-radius:6px"></div><svg class="ic" style="left:0;top:0" width="1" height="1"><path d="M1803.25 980.0 L1810.75 986.5 L1803.25 993.0" fill="none" stroke="#d8d8d8" stroke-width="1.5" stroke-linecap="round" stroke-linejoin="round"/></svg><div class="t" style="left:1819.5px;top:973.7px">形态键</div><svg class="ic" style="left:0;top:0" width="1" height="1"><rect x="2060.0" y="983.3" width="1.6" height="1.6" fill="#6a6a6a"/><rect x="2060.0" y="987.9" width="1.6" height="1.6" fill="#6a6a6a"/><rect x="2064.6" y="983.3" width="1.6" height="1.6" fill="#6a6a6a"/><rect x="2064.6" y="987.9" width="1.6" height="1.6" fill="#6a6a6a"/><rect x="2069.2" y="983.3" width="1.6" height="1.6" fill="#6a6a6a"/><rect x="2069.2" y="987.9" width="1.6" height="1.6" fill="#6a6a6a"/><rect x="2073.8" y="983.3" width="1.6" height="1.6" fill="#6a6a6a"/><rect x="2073.8" y="987.9" width="1.6" height="1.6" fill="#6a6a6a"/></svg>
<div class="a" style="left:1789px;top:1006.5px;width:301.5px;height:35.5px;background:#3d3d3d;border:1px solid #4a4a4a;border-radius:6px"></div><svg class="ic" style="left:0;top:0" width="1" height="1"><path d="M1803.25 1018.0 L1810.75 1024.5 L1803.25 1031.0" fill="none" stroke="#d8d8d8" stroke-width="1.5" stroke-linecap="round" stroke-linejoin="round"/></svg><div class="t" style="left:1819.5px;top:1011.7px">动画</div><svg class="ic" style="left:0;top:0" width="1" height="1"><rect x="2060.0" y="1021.3" width="1.6" height="1.6" fill="#6a6a6a"/><rect x="2060.0" y="1025.8999999999999" width="1.6" height="1.6" fill="#6a6a6a"/><rect x="2064.6" y="1021.3" width="1.6" height="1.6" fill="#6a6a6a"/><rect x="2064.6" y="1025.8999999999999" width="1.6" height="1.6" fill="#6a6a6a"/><rect x="2069.2" y="1021.3" width="1.6" height="1.6" fill="#6a6a6a"/><rect x="2069.2" y="1025.8999999999999" width="1.6" height="1.6" fill="#6a6a6a"/><rect x="2073.8" y="1021.3" width="1.6" height="1.6" fill="#6a6a6a"/><rect x="2073.8" y="1025.8999999999999" width="1.6" height="1.6" fill="#6a6a6a"/></svg>
<div class="a" style="left:1789px;top:1044.5px;width:301.5px;height:35.5px;background:#3d3d3d;border:1px solid #4a4a4a;border-radius:6px"></div><svg class="ic" style="left:0;top:0" width="1" height="1"><path d="M1803.25 1056.0 L1810.75 1062.5 L1803.25 1069.0" fill="none" stroke="#d8d8d8" stroke-width="1.5" stroke-linecap="round" stroke-linejoin="round"/></svg><div class="t" style="left:1819.5px;top:1049.7px">自定义属性</div><svg class="ic" style="left:0;top:0" width="1" height="1"><rect x="2060.0" y="1059.3" width="1.6" height="1.6" fill="#6a6a6a"/><rect x="2060.0" y="1063.8999999999999" width="1.6" height="1.6" fill="#6a6a6a"/><rect x="2064.6" y="1059.3" width="1.6" height="1.6" fill="#6a6a6a"/><rect x="2064.6" y="1063.8999999999999" width="1.6" height="1.6" fill="#6a6a6a"/><rect x="2069.2" y="1059.3" width="1.6" height="1.6" fill="#6a6a6a"/><rect x="2069.2" y="1063.8999999999999" width="1.6" height="1.6" fill="#6a6a6a"/><rect x="2073.8" y="1059.3" width="1.6" height="1.6" fill="#6a6a6a"/><rect x="2073.8" y="1063.8999999999999" width="1.6" height="1.6" fill="#6a6a6a"/></svg>
<div class="t" style="left:1793px;width:100.5px;text-align:right;top:534.0px;color:#e6e6e6">偏移</div>
<div class="a" style="left:1908px;top:535px;width:140px;height:27px;background:#545454;border-radius:5px;text-align:center;line-height:27px;white-space:nowrap"><span class="l"><span class="d">0</span> m</span></div>
<svg class="ic" style="left:0;top:0" width="1" height="1"><circle cx="2063.5" cy="548.5" r="2.6" fill="#e0e0e0"/></svg>
<div class="t" style="left:1793px;width:100.5px;text-align:right;top:566.0px;color:#e6e6e6">挤出</div>
<div class="a" style="left:1908px;top:567px;width:140px;height:27px;background:#545454;border-radius:5px;text-align:center;line-height:27px;white-space:nowrap"><span class="l"><span class="d">0</span> m</span></div>
<svg class="ic" style="left:0;top:0" width="1" height="1"><circle cx="2063.5" cy="580.5" r="2.6" fill="#e0e0e0"/></svg>
<div class="t" style="left:1793px;width:100.5px;text-align:right;top:598.0px;color:#e6e6e6">锥化物体</div>
<div class="a" style="left:1908px;top:599px;width:140px;height:27px;background:#1d1d1d;border:1px solid #3a3a3a;border-radius:5px"></div>
<svg class="ic" style="left:0;top:0" width="1" height="1"><rect x="1919.4" y="606.9" width="11.2" height="11.2" fill="#e0e0e0"/><g fill="none" stroke="#e0e0e0" stroke-width="1.4" opacity=".75"><path d="M1914.8 606.1 V602.3 H1918.6"/><path d="M1935.2 606.1 V602.3 H1931.4"/><path d="M1914.8 618.9 V622.7 H1918.6"/><path d="M1935.2 618.9 V622.7 H1931.4"/></g></svg>
<div class="t" style="left:1945.5px;top:598px;color:#6e6e6e">物体</div>
<svg class="ic" style="left:0;top:0" width="1" height="1"><g transform="translate(2033 612) rotate(45)"><path d="M-2.2 -3 H2.2 V8 L0 11.6 L-2.2 8 Z" fill="none" stroke="#c8c8c8" stroke-width="1.3"/><path d="M-4.4 -3.4 H4.4" stroke="#c8c8c8" stroke-width="1.8"/><rect x="-2.8" y="-10.4" width="5.6" height="7" rx="2.4" fill="#c8c8c8"/></g></svg>
<div class="t" style="left:1793px;width:100.5px;text-align:right;top:630.0px;color:#e6e6e6">锥化半径</div>
<div class="a" style="left:1908px;top:631px;width:140px;height:27px;background:#282828;border:1px solid #3a3a3a;border-radius:5px"></div>
<div class="t" style="left:1918.5px;top:630px">覆盖</div>
<svg class="ic" style="left:0;top:0" width="1" height="1"><path d="M2033.9 643.3 L2038.5 647.7 L2043.1 643.3" fill="none" stroke="#e6e6e6" stroke-width="1.7" stroke-linecap="round" stroke-linejoin="round"/></svg>
<svg class="ic" style="left:0;top:0" width="1" height="1"><circle cx="2063.5" cy="644.5" r="2.6" fill="#e0e0e0"/></svg>
<div class="a" style="left:1908px;top:667px;width:19px;height:19px;background:#474747;border-radius:4px"></div><div class="t" style="left:1932px;top:662.5px;color:#8a8a8a">映射锥化</div>
<svg class="ic" style="left:0;top:0" width="1" height="1"><circle cx="2063.5" cy="676.5" r="2.6" fill="#555"/></svg>
<svg class="ic" style="left:0;top:0" width="1" height="1"><path d="M1822.02 719.14 L1828 724.86 L1833.98 719.14" fill="none" stroke="#d8d8d8" stroke-width="1.5" stroke-linecap="round" stroke-linejoin="round"/></svg>
<div class="t" style="left:1840px;top:707.5px">倒角</div>
<div class="a" style="left:1792px;top:739px;width:295px;height:149.5px;background:#353535;border-radius:5px"></div>
<div class="a" style="left:1801.5px;top:751.5px;width:276px;height:27.5px;background:#545454;border-radius:5px;overflow:hidden"><div class="a" style="left:0;top:0;width:90.5px;height:28px;background:#4772b3"></div><div class="a" style="left:90.5px;top:0;width:1px;height:28px;background:#3d3d3d"></div><div class="a" style="left:183px;top:0;width:1px;height:28px;background:#3d3d3d"></div></div>
<div class="t" style="left:1801.5px;width:91px;text-align:center;top:751px;color:#fff">圆形</div>
<div class="t" style="left:1893px;width:91px;text-align:center;top:751px;color:#e6e6e6">物体</div>
<div class="t" style="left:1985px;width:91px;text-align:center;top:751px;color:#e6e6e6">轮廓</div>
<div class="t" style="left:1793px;width:100.5px;text-align:right;top:787.0px;color:#e6e6e6">深度</div>
<div class="a" style="left:1908px;top:788px;width:140px;height:27px;background:#545454;border-radius:5px;text-align:center;line-height:27px;white-space:nowrap"><span class="l"><span class="d">0.029</span> m</span></div>
<svg class="ic" style="left:0;top:0" width="1" height="1"><circle cx="2063.5" cy="801.5" r="2.6" fill="#e0e0e0"/></svg>
<div class="t" style="left:1793px;width:100.5px;text-align:right;top:819.0px;color:#e6e6e6">分辨率</div>
<div class="a" style="left:1908px;top:820px;width:140px;height:27px;background:#545454;border-radius:5px;text-align:center;line-height:27px;white-space:nowrap"><span class="l"><span class="d">4</span></span></div>
<svg class="ic" style="left:0;top:0" width="1" height="1"><circle cx="2063.5" cy="833.5" r="2.6" fill="#e0e0e0"/></svg>
<div class="a" style="left:1908px;top:856px;width:19px;height:19px;background:#545454;border-radius:4px"></div><div class="t" style="left:1932px;top:851px">填充封盖</div>
<svg class="ic" style="left:0;top:0" width="1" height="1"><circle cx="2063.5" cy="865.5" r="2.6" fill="#e0e0e0"/></svg>
<svg class="ic" style="left:0;top:0" width="1" height="1"><path d="M1823.75 904.0 L1831.25 910.5 L1823.75 917.0" fill="none" stroke="#d8d8d8" stroke-width="1.5" stroke-linecap="round" stroke-linejoin="round"/></svg>
<div class="t" style="left:1840px;top:896.5px">开始 <span class="l">&</span> 结束映射</div>
<div class="area" style="left:3px;top:1152.5px;width:1726px;height:83.3px;background:#1d1d1d;border:1px solid #333">
<div class="a" style="left:0;top:0;width:1726px;height:37px;background:#303030"></div>
<div class="a" style="left:0;top:72px;width:1726px;height:12px;background:#2b2b2b"></div>
<div class="a" style="left:10px;top:73.5px;width:1703px;height:9px;background:#303030;border-radius:5px"></div>
</div>
<svg class="ic" style="left:0;top:0" width="1" height="1"><rect x="60.9" y="1225.5" width="1.2" height="10" fill="#1c1c1c"/><rect x="99.42" y="1225.5" width="1.2" height="10" fill="#272727"/><rect x="137.94" y="1225.5" width="1.2" height="10" fill="#1c1c1c"/><rect x="176.46" y="1225.5" width="1.2" height="10" fill="#272727"/><rect x="214.98" y="1225.5" width="1.2" height="10" fill="#1c1c1c"/><rect x="253.5" y="1225.5" width="1.2" height="10" fill="#272727"/><rect x="292.02" y="1225.5" width="1.2" height="10" fill="#1c1c1c"/><rect x="330.53999999999996" y="1225.5" width="1.2" height="10" fill="#272727"/><rect x="369.05999999999995" y="1225.5" width="1.2" height="10" fill="#1c1c1c"/><rect x="407.58" y="1225.5" width="1.2" height="10" fill="#272727"/><rect x="446.09999999999997" y="1225.5" width="1.2" height="10" fill="#1c1c1c"/><rect x="484.61999999999995" y="1225.5" width="1.2" height="10" fill="#272727"/><rect x="523.14" y="1225.5" width="1.2" height="10" fill="#1c1c1c"/><rect x="561.66" y="1225.5" width="1.2" height="10" fill="#272727"/><rect x="600.18" y="1225.5" width="1.2" height="10" fill="#1c1c1c"/><rect x="638.6999999999999" y="1225.5" width="1.2" height="10" fill="#272727"/><rect x="677.2199999999999" y="1225.5" width="1.2" height="10" fill="#1c1c1c"/><rect x="715.74" y="1225.5" width="1.2" height="10" fill="#272727"/><rect x="754.26" y="1225.5" width="1.2" height="10" fill="#1c1c1c"/><rect x="792.78" y="1225.5" width="1.2" height="10" fill="#272727"/><rect x="831.3" y="1225.5" width="1.2" height="10" fill="#1c1c1c"/><rect x="869.8199999999999" y="1225.5" width="1.2" height="10" fill="#272727"/><rect x="908.3399999999999" y="1225.5" width="1.2" height="10" fill="#1c1c1c"/><rect x="946.86" y="1225.5" width="1.2" height="10" fill="#272727"/><rect x="985.38" y="1225.5" width="1.2" height="10" fill="#1c1c1c"/><rect x="1023.9" y="1225.5" width="1.2" height="10" fill="#272727"/><rect x="1062.42" y="1225.5" width="1.2" height="10" fill="#1c1c1c"/><rect x="1100.94" y="1225.5" width="1.2" height="10" fill="#272727"/><rect x="1139.46" y="1225.5" width="1.2" height="10" fill="#1c1c1c"/><rect x="1177.98" y="1225.5" width="1.2" height="10" fill="#272727"/><rect x="1216.5" y="1225.5" width="1.2" height="10" fill="#1c1c1c"/><rect x="1255.02" y="1225.5" width="1.2" height="10" fill="#272727"/><rect x="1293.54" y="1225.5" width="1.2" height="10" fill="#1c1c1c"/><rect x="1332.0600000000002" y="1225.5" width="1.2" height="10" fill="#272727"/><rect x="1370.5800000000002" y="1225.5" width="1.2" height="10" fill="#1c1c1c"/><rect x="1409.1000000000001" y="1225.5" width="1.2" height="10" fill="#272727"/><rect x="1447.6200000000001" y="1225.5" width="1.2" height="10" fill="#1c1c1c"/><rect x="1486.14" y="1225.5" width="1.2" height="10" fill="#272727"/><rect x="1524.66" y="1225.5" width="1.2" height="10" fill="#1c1c1c"/><rect x="1563.18" y="1225.5" width="1.2" height="10" fill="#272727"/><rect x="1601.7" y="1225.5" width="1.2" height="10" fill="#1c1c1c"/><rect x="1640.22" y="1225.5" width="1.2" height="10" fill="#272727"/><rect x="1678.74" y="1225.5" width="1.2" height="10" fill="#1c1c1c"/><rect x="1717.26" y="1225.5" width="1.2" height="10" fill="#272727"/><rect x="66" y="1225.5" width="1.6" height="10" fill="#111"/><rect x="1665.5" y="1225.5" width="1.6" height="10" fill="#111"/><circle cx="19" cy="1230.3" r="2.2" fill="#222"/><circle cx="1712" cy="1230.3" r="2.2" fill="#222"/><path d="M6.5 1229 L11.5 1234.5 M9 1235 H12 V1232" stroke="#5a5a5a" stroke-width="1.2" fill="none"/></svg>
<div class="btn" style="left:15px;top:1157.5px;width:46px"></div>
<svg class="ic" style="left:0;top:0" width="1" height="1"><circle cx="32.7" cy="1171.5" r="10.2" fill="#e6e6e6"/><path d="M36.1 1165.9 L30.900000000000002 1171.3 L36.300000000000004 1178.1" stroke="#282828" stroke-width="2.6" fill="none" stroke-linecap="round" stroke-linejoin="round"/></svg>
<svg class="ic" style="left:0;top:0" width="1" height="1"><path d="M46.9 1170.3 L51.5 1174.7 L56.1 1170.3" fill="none" stroke="#e6e6e6" stroke-width="1.7" stroke-linecap="round" stroke-linejoin="round"/></svg>
<div class="t" style="left:79px;top:1157px">视图</div><div class="t" style="left:135px;top:1157px">标记</div>
<div class="btn" style="left:187px;top:1157.5px;width:71px"></div><div class="t" style="left:199px;top:1157px">回放</div>
<svg class="ic" style="left:0;top:0" width="1" height="1"><path d="M243.9 1170.3 L248.5 1174.7 L253.1 1170.3" fill="none" stroke="#e6e6e6" stroke-width="1.7" stroke-linecap="round" stroke-linejoin="round"/></svg>
<div class="btn" style="left:651.5px;top:1157.5px;width:57px;border-color:#383838"></div>
<div class="a" style="left:652.5px;top:1158.5px;width:27px;height:26px;background:#545454;border-radius:4px 0 0 4px"></div>
<svg class="ic" style="left:0;top:0" width="1" height="1"><circle cx="665.5" cy="1171.5" r="7" fill="none" stroke="#c8c8c8" stroke-width="1.4"/></svg>
<svg class="ic" style="left:0;top:0" width="1" height="1"><path d="M688.9 1170.3 L693.5 1174.7 L698.1 1170.3" fill="none" stroke="#555" stroke-width="1.7" stroke-linecap="round" stroke-linejoin="round"/></svg>
<div class="a" style="left:716.8px;top:1157.5px;width:172.6px;height:28px;background:#545454;border-radius:5px"></div>
<div class="a" style="left:744.3px;top:1157.5px;width:1px;height:28px;background:#444"></div>
<div class="a" style="left:773.6px;top:1157.5px;width:1px;height:28px;background:#444"></div>
<div class="a" style="left:802.5px;top:1157.5px;width:1px;height:28px;background:#444"></div>
<div class="a" style="left:831.5px;top:1157.5px;width:1px;height:28px;background:#444"></div>
<div class="a" style="left:860.4px;top:1157.5px;width:1px;height:28px;background:#444"></div>
<svg class="ic" style="left:0;top:0" width="1" height="1"><rect x="723" y="1163.5" width="3" height="16" fill="#e6e6e6"/><path d="M727 1171.5 L737 1163.9 V1179.1 Z" fill="#e6e6e6"/><path d="M753 1164.3 L758.904 1171.5 L753 1178.7 L747.096 1171.5 Z" fill="#e6e6e6"/><path d="M761.5 1171.5 L769.5 1165.5 V1177.5 Z" fill="#e6e6e6"/><path d="M780 1171.5 L795 1162.0 V1181.0 Z" fill="#e6e6e6"/><path d="M825 1171.5 L810 1162.0 V1181.0 Z" fill="#e6e6e6"/><path d="M842 1171.5 L834 1165.5 V1177.5 Z" fill="#e6e6e6"/><path d="M850.5 1164.3 L856.404 1171.5 L850.5 1178.7 L844.596 1171.5 Z" fill="#e6e6e6"/><path d="M878.5 1171.5 L868.5 1163.9 V1179.1 Z" fill="#e6e6e6"/><rect x="879.5" y="1163.5" width="3" height="16" fill="#e6e6e6"/></svg>
<div class="btn" style="left:897.7px;top:1157.5px;width:85.8px;border-color:#383838"></div>
<div class="a" style="left:898.7px;top:1158.5px;width:56px;height:26px;background:#545454;border-radius:4px 0 0 4px"></div>
<div class="a" style="left:925.6px;top:1158.5px;width:1px;height:26px;background:#444"></div>
<svg class="ic" style="left:0;top:0" width="1" height="1"><path d="M904 1171.5 L913 1165.3 V1177.7 Z" fill="#e6e6e6"/><rect x="915.5" y="1165.3" width="2.8" height="12.4" fill="#e6e6e6"/><rect x="933.5" y="1165.3" width="2.8" height="12.4" fill="#e6e6e6"/><path d="M948 1171.5 L939 1165.3 V1177.7 Z" fill="#e6e6e6"/></svg>
<svg class="ic" style="left:0;top:0" width="1" height="1"><path d="M964.4 1170.3 L969 1174.7 L973.6 1170.3" fill="none" stroke="#e6e6e6" stroke-width="1.7" stroke-linecap="round" stroke-linejoin="round"/></svg>
<div class="btn" style="left:991.4px;top:1157.5px;width:57.2px;border-color:#383838"></div>
<div class="a" style="left:992.4px;top:1158.5px;width:27.2px;height:26px;background:#545454;border-radius:4px 0 0 4px"></div>
<svg class="ic" style="left:0;top:0" width="1" height="1"><path d="M996.9 1176.1 V1169.5 A8.6 8.6 0 0 1 1014.1 1169.5 V1176.1 H1010.5 V1169.5 A5 5 0 0 0 1000.5 1169.5 V1176.1 Z" fill="none" stroke="#c8c8c8" stroke-width="1.4" stroke-linejoin="round"/><path d="M994.5 1180.5 H1016.5" stroke="#c8c8c8" stroke-width="1.4"/></svg>
<svg class="ic" style="left:0;top:0" width="1" height="1"><path d="M1029.4 1170.3 L1034 1174.7 L1038.6 1170.3" fill="none" stroke="#e6e6e6" stroke-width="1.7" stroke-linecap="round" stroke-linejoin="round"/></svg>
<div class="a" style="left:1236.7px;top:1158px;width:106.3px;height:27.5px;background:#545454;border-radius:5px;text-align:center;line-height:27.5px"><span class="l"><span class="d">23</span></span></div>
<div class="a" style="left:1351.8px;top:1158px;width:283.4px;height:27.5px;background:#545454;border-radius:5px"></div>
<div class="a" style="left:1379.5px;top:1158px;width:1px;height:27.5px;background:#444"></div>
<div class="a" style="left:1507.3px;top:1158px;width:1px;height:27.5px;background:#444"></div>
<svg class="ic" style="left:0;top:0" width="1" height="1"><circle cx="1365.5" cy="1172.5" r="8.4" fill="none" stroke="#e0e0e0" stroke-width="1.5"/><path d="M1365.5 1167.5 V1172.9 H1369.5" stroke="#e0e0e0" stroke-width="1.5" fill="none"/><path d="M1362.9 1161.9 H1368.1 M1372.1 1165.1 L1374.5 1162.9" stroke="#e0e0e0" stroke-width="1.6"/></svg>
<div class="t" style="left:1402.5px;top:1157.5px">起始</div><div class="t" style="left:1460px;width:40px;text-align:center;top:1157.5px"><span class="l"><span class="d">1</span></span></div>
<div class="t" style="left:1530.5px;top:1157.5px">结束</div><div class="t" style="left:1582px;top:1157.5px"><span class="l"><span class="d">250</span></span></div>
<div class="btn" style="left:1659.5px;top:1157.5px;width:57px"></div>
<div class="a" style="left:1660.5px;top:1158.5px;width:27px;height:26px;background:#4772b3;border-radius:4px 0 0 4px"></div>
<svg class="ic" style="left:0;top:0" width="1" height="1"><circle cx="1676.1" cy="1168.9" r="7.2" fill="#ffffff"/><circle cx="1670.7" cy="1174.5" r="6.4" fill="none" stroke="#4772b3" stroke-width="4.2"/><circle cx="1670.7" cy="1174.5" r="6.4" fill="none" stroke="#ffffff" stroke-width="1.5" stroke-dasharray="26 14" transform="rotate(25 1670.7 1174.5)"/><path d="M1673.5 1168.1 L1678.3 1173.1" stroke="#4772b3" stroke-width="1.4"/></svg>
<svg class="ic" style="left:0;top:0" width="1" height="1"><path d="M1696.9 1170.3 L1701.5 1174.7 L1706.1 1170.3" fill="none" stroke="#e6e6e6" stroke-width="1.7" stroke-linecap="round" stroke-linejoin="round"/></svg>
<div class="t" style="left:31.5px;width:60px;text-align:center;top:1194px;color:#a6a6a6"><span class="l">0</span></div>
<div class="t" style="left:108.53999999999999px;width:60px;text-align:center;top:1194px;color:#a6a6a6"><span class="l">12</span></div>
<div class="t" style="left:262.62px;width:60px;text-align:center;top:1194px;color:#a6a6a6"><span class="l">36</span></div>
<div class="t" style="left:339.65999999999997px;width:60px;text-align:center;top:1194px;color:#a6a6a6"><span class="l">48</span></div>
<div class="t" style="left:416.7px;width:60px;text-align:center;top:1194px;color:#a6a6a6"><span class="l">60</span></div>
<div class="t" style="left:493.74px;width:60px;text-align:center;top:1194px;color:#a6a6a6"><span class="l">72</span></div>
<div class="t" style="left:570.78px;width:60px;text-align:center;top:1194px;color:#a6a6a6"><span class="l">84</span></div>
<div class="t" style="left:647.8199999999999px;width:60px;text-align:center;top:1194px;color:#a6a6a6"><span class="l">96</span></div>
<div class="t" style="left:724.86px;width:60px;text-align:center;top:1194px;color:#a6a6a6"><span class="l">108</span></div>
<div class="t" style="left:801.9px;width:60px;text-align:center;top:1194px;color:#a6a6a6"><span class="l">120</span></div>
<div class="t" style="left:878.9399999999999px;width:60px;text-align:center;top:1194px;color:#a6a6a6"><span class="l">132</span></div>
<div class="t" style="left:955.98px;width:60px;text-align:center;top:1194px;color:#a6a6a6"><span class="l">144</span></div>
<div class="t" style="left:1033.02px;width:60px;text-align:center;top:1194px;color:#a6a6a6"><span class="l">156</span></div>
<div class="t" style="left:1110.06px;width:60px;text-align:center;top:1194px;color:#a6a6a6"><span class="l">168</span></div>
<div class="t" style="left:1187.1px;width:60px;text-align:center;top:1194px;color:#a6a6a6"><span class="l">180</span></div>
<div class="t" style="left:1264.1399999999999px;width:60px;text-align:center;top:1194px;color:#a6a6a6"><span class="l">192</span></div>
<div class="t" style="left:1341.18px;width:60px;text-align:center;top:1194px;color:#a6a6a6"><span class="l">204</span></div>
<div class="t" style="left:1418.22px;width:60px;text-align:center;top:1194px;color:#a6a6a6"><span class="l">216</span></div>
<div class="t" style="left:1495.26px;width:60px;text-align:center;top:1194px;color:#a6a6a6"><span class="l">228</span></div>
<div class="t" style="left:1572.3px;width:60px;text-align:center;top:1194px;color:#a6a6a6"><span class="l">240</span></div>
<div class="t" style="left:1649.34px;width:60px;text-align:center;top:1194px;color:#a6a6a6"><span class="l">252</span></div>
<div class="a" style="left:192px;top:1192.6px;width:34.5px;height:30.5px;background:#4772b3;border-radius:4.5px"></div>
<svg class="ic" style="left:0;top:0" width="1" height="1"><path d="M204 1223 L209.2 1229 L214.4 1223 Z" fill="#4772b3"/><rect x="208.2" y="1223" width="2" height="12.5" fill="#4772b3"/></svg>
<div class="t" style="left:192px;width:34.5px;text-align:center;top:1194px;color:#fff"><span class="l">23</span></div>
<svg class="ic" style="left:0;top:0" width="1" height="1"><rect x="10.3" y="1244" width="15.6" height="22" rx="4" fill="none" stroke="#929292" stroke-width="1.4"/><path d="M10.5 1254 V1248 Q10.5 1244.4 14.1 1244.4 H18.1 V1254 Z" fill="#929292"/></svg>
<div class="t" style="left:28.3px;top:1240.4px;color:#9c9c9c">确认</div>
<svg class="ic" style="left:0;top:0" width="1" height="1"><rect x="78.3" y="1244" width="15.6" height="22" rx="4" fill="none" stroke="#929292" stroke-width="1.4"/><path d="M93.7 1254 V1248 Q93.7 1244.4 90.1 1244.4 H86.1 V1254 Z" fill="#929292"/></svg>
<div class="t" style="left:96.6px;top:1240.4px;color:#9c9c9c">取消</div>
<div class="a" style="left:146px;top:1243.5px;width:23px;height:23px;border:1.4px solid #929292;border-radius:5px;color:#929292;text-align:center;line-height:20.5px;white-space:nowrap"><span class="l" style="letter-spacing:0">X</span></div>
<div class="a" style="left:172.6px;top:1243.5px;width:23px;height:23px;border:1.4px solid #929292;border-radius:5px;color:#929292;text-align:center;line-height:20.5px;white-space:nowrap"><span class="l" style="letter-spacing:0">Y</span></div>
<div class="a" style="left:199px;top:1243.5px;width:23px;height:23px;border:1.4px solid #929292;border-radius:5px;color:#929292;text-align:center;line-height:20.5px;white-space:nowrap"><span class="l" style="letter-spacing:0">Z</span></div>
<div class="t" style="left:222.8px;top:1240.4px;color:#9c9c9c">轴向</div>
<svg class="ic" style="left:0;top:0" width="1" height="1"><path d="M283.6 1244 L295.0 1255.6 H289.6 V1266 H277.6 V1255.6 H272.20000000000005 Z" fill="none" stroke="#929292" stroke-width="1.4" stroke-linejoin="round"/></svg>
<div class="a" style="left:299px;top:1243.5px;width:23px;height:23px;border:1.4px solid #929292;border-radius:5px;color:#929292;text-align:center;line-height:20.5px;white-space:nowrap"><span class="l" style="letter-spacing:0">X</span></div>
<div class="a" style="left:325.4px;top:1243.5px;width:23px;height:23px;border:1.4px solid #929292;border-radius:5px;color:#929292;text-align:center;line-height:20.5px;white-space:nowrap"><span class="l" style="letter-spacing:0">Y</span></div>
<div class="a" style="left:351.6px;top:1243.5px;width:23px;height:23px;border:1.4px solid #929292;border-radius:5px;color:#929292;text-align:center;line-height:20.5px;white-space:nowrap"><span class="l" style="letter-spacing:0">Z</span></div>
<div class="t" style="left:375.6px;top:1240.4px;color:#9c9c9c">平面</div>
<div class="a" style="left:425px;top:1243.5px;width:23px;height:23px;border:1.4px solid #929292;border-radius:5px;color:#929292;text-align:center;line-height:20.5px;white-space:nowrap"><span class="l" style="letter-spacing:0">C</span></div>
<div class="t" style="left:449.2px;top:1240.4px;color:#9c9c9c">清除约束</div>
<div class="a" style="left:533px;top:1243.5px;width:23px;height:23px;border:1.4px solid #929292;border-radius:5px;color:#929292;text-align:center;line-height:20.5px;white-space:nowrap"><span class="l" style="letter-spacing:0">B</span></div>
<div class="t" style="left:558px;top:1240.4px;color:#9c9c9c">设置吸附基准</div>
<div class="a" style="left:674px;top:1243.5px;width:35.5px;height:23px;border:1.4px solid #929292;border-radius:5px;color:#929292;text-align:center;line-height:20.5px;white-space:nowrap"><span class="l" style="letter-spacing:0">Ctrl</span></div>
<div class="t" style="left:710.8px;top:1240.4px;color:#9c9c9c">吸附反转</div>
<svg class="ic" style="left:0;top:0" width="1" height="1"><path d="M806 1244 L817.4 1255.6 H812 V1266 H800 V1255.6 H794.6 Z" fill="none" stroke="#929292" stroke-width="1.4" stroke-linejoin="round"/></svg>
<div class="a" style="left:820px;top:1243.5px;width:23px;height:23px;border:1.4px solid #929292;border-radius:5px"></div><svg class="ic" style="left:0;top:0" width="1" height="1"><g stroke="#929292" stroke-width="1.3" fill="none"><path d="M825 1248.5 V1254.5 M826.4 1251.5 H837 M829.4 1248.7 L826.4 1251.5 L829.4 1254.3"/><path d="M838 1255.5 V1261.5 M836.6 1258.5 H826 M833.6 1255.7 L836.6 1258.5 L833.6 1261.3"/></g></svg>
<div class="t" style="left:845px;top:1240.4px;color:#9c9c9c">吸附开关</div>
<div class="a" style="left:928px;top:1243.5px;width:23.5px;height:23px;border:1.4px solid #929292;border-radius:5px;color:#929292;text-align:center;line-height:20.5px;white-space:nowrap"><span class="l" style="letter-spacing:0">R</span></div>
<div class="t" style="left:952.8px;top:1240.4px;color:#9c9c9c">旋转</div>
<div class="a" style="left:1002.6px;top:1243.5px;width:23.5px;height:23px;border:1.4px solid #929292;border-radius:5px;color:#929292;text-align:center;line-height:20.5px;white-space:nowrap"><span class="l" style="letter-spacing:0">S</span></div>
<div class="t" style="left:1027.6px;top:1240.4px;color:#9c9c9c">调整大小</div>
<svg class="ic" style="left:0;top:0" width="1" height="1"><rect x="1112.3999999999999" y="1244" width="15.6" height="22" rx="4" fill="none" stroke="#929292" stroke-width="1.4"/><rect x="1117.8" y="1246.4" width="4.8" height="9.4" rx="1.6" fill="#929292"/></svg>
<div class="t" style="left:1130.6px;top:1240.4px;color:#9c9c9c">自动约束</div>
<svg class="ic" style="left:0;top:0" width="1" height="1"><path d="M1224 1244 L1235.4 1255.6 H1230 V1266 H1218 V1255.6 H1212.6 Z" fill="none" stroke="#929292" stroke-width="1.4" stroke-linejoin="round"/></svg>
<svg class="ic" style="left:0;top:0" width="1" height="1"><rect x="1239.3" y="1244" width="15.6" height="22" rx="4" fill="none" stroke="#929292" stroke-width="1.4"/><rect x="1244.7" y="1246.4" width="4.8" height="9.4" rx="1.6" fill="#929292"/></svg>
<div class="t" style="left:1257.2px;top:1240.4px;color:#9c9c9c">自动约束平面</div>
<svg class="ic" style="left:0;top:0" width="1" height="1"><path d="M1386 1244 L1397.4 1255.6 H1392 V1266 H1380 V1255.6 H1374.6 Z" fill="none" stroke="#929292" stroke-width="1.4" stroke-linejoin="round"/></svg>
<div class="t" style="left:1398.4px;top:1240.4px;color:#9c9c9c">精确模式</div>
<div class="a" style="left:1482px;top:1243.5px;width:35px;height:23px;border:1.4px solid #929292;border-radius:5px;color:#929292;text-align:center;line-height:20.5px;white-space:nowrap"><span class="l" style="letter-spacing:0">Alt</span></div>
<div class="t" style="left:1518.6px;top:1240.4px;color:#9c9c9c">导航</div>
<div class="t" style="left:2040px;width:46.5px;text-align:right;top:1240.4px;color:#8e8e8e"><span class="l"><span class="d">5.0.0</span></span></div>
<svg class="ic" style="left:0;top:0" width="1" height="1"><path d="M2106 1271 V1264.5 Q2105 1269 2100 1271 Z" fill="#6a3aa0"/><path d="M0 1271 V1264.5 Q1 1269 6 1271 Z" fill="#6a3aa0"/></svg>
</body></html>
